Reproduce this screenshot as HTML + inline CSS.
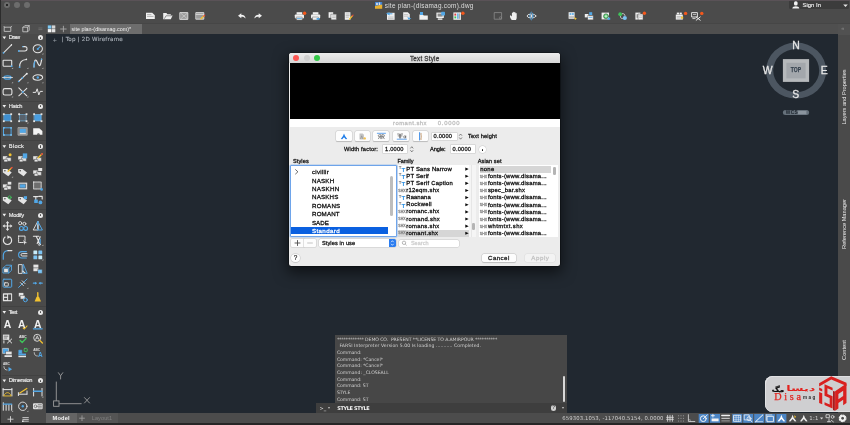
<!DOCTYPE html>
<html><head><meta charset="utf-8"><title>Text Style</title>
<style>
html,body{margin:0;padding:0;background:#212830;}
body{width:850px;height:425px;overflow:hidden;position:relative;font-family:"Liberation Sans",sans-serif;}
#root{position:absolute;left:0;top:0;width:850px;height:425px;overflow:hidden;will-change:transform;}
.r{position:absolute;box-sizing:border-box;}
.t{position:absolute;white-space:nowrap;}
.dj{font-family:"DejaVu Sans","Liberation Sans",sans-serif;}
.b{font-weight:bold;}
.k{-webkit-text-stroke:0.26px currentColor;}
svg{position:absolute;left:0;top:0;overflow:visible;}
</style></head><body><div id="root">
<div class="r" style="left:0px;top:0px;width:850px;height:24px;background:#4b4b4b;"></div>
<div class="r" style="left:0px;top:0px;width:850px;height:1px;background:#5a5257;"></div>
<div class="r" style="left:0px;top:23px;width:850px;height:11px;background:#4f4f4f;"></div>
<div class="r" style="left:0px;top:22.8px;width:850px;height:0.6px;background:#464646;"></div>
<div class="r" style="left:70px;top:23.8px;width:72px;height:10px;background:#6d6d6d;"></div>
<div class="r" style="left:0px;top:34px;width:45.5px;height:391px;background:#4a4a4a;"></div>
<div class="r" style="left:0px;top:0px;width:1.2px;height:425px;background:#2c2c2c;"></div>
<div class="r" style="left:838px;top:34.5px;width:12px;height:379px;background:#4a4a4a;"></div>
<div class="r" style="left:45.5px;top:412.6px;width:805px;height:12px;background:#4c4c4c;"></div>
<div class="r" style="left:46px;top:412.6px;width:30.5px;height:10.4px;background:#646464;"></div>
<div class="r" style="left:76.5px;top:412.6px;width:41.5px;height:10.4px;background:#545454;"></div>
<div class="r" style="left:0px;top:422.8px;width:850px;height:2.2px;background:#262626;"></div>
<div class="r" style="left:3.9999999999999996px;top:1.9999999999999996px;width:6.2px;height:6.2px;background:#6c6c6c;border-radius:50%;"></div>
<div class="r" style="left:13.9px;top:1.9999999999999996px;width:6.2px;height:6.2px;background:#6c6c6c;border-radius:50%;"></div>
<div class="r" style="left:23.9px;top:1.9999999999999996px;width:6.2px;height:6.2px;background:#6c6c6c;border-radius:50%;"></div>
<div class="r" style="left:5.8px;top:3.8px;width:2.6px;height:2.6px;background:#111;border-radius:50%;"></div>
<div class="r" style="left:789.2px;top:0.6px;width:59.4px;height:8.9px;background:#3c3c3c;border-radius:0 0 1.5px 1.5px;"></div>
<div class="t " style="left:802.6px;top:1.66px;font-size:5.9px;line-height:7.08px;color:#ececec;letter-spacing:0.005px;-webkit-text-stroke:0.15px #ececec;">Sign In</div>
<div class="t " style="left:384.7px;top:1.76px;font-size:6.4px;line-height:7.68px;color:#dedede;letter-spacing:0.269px;">site plan-(disamag.com).dwg</div>
<div class="t " style="left:71.5px;top:26.06px;font-size:5.4px;line-height:6.48px;color:#f0f0f0;">site plan-(disamag.com)*</div>
<div class="t dj" style="left:52.6px;top:36.90px;font-size:5.5px;line-height:6.60px;color:#9aa0a8;">+</div>
<div class="t dj" style="left:61.6px;top:36.34px;font-size:5.6px;line-height:6.72px;color:#aab0b8;letter-spacing:0.199px;-webkit-text-stroke:0.12px #aab0b8;">| Top | 2D Wireframe</div>
<div class="t " style="left:8.8px;top:34.48px;font-size:5.7px;line-height:6.84px;color:#ececec;letter-spacing:-0.667px;-webkit-text-stroke:0.15px #ececec;">Draw</div>
<svg width="850" height="425"><path d="M2.5,36.6 h3.6 l-1.8,2.7 z" fill="#f0f0f0"/></svg>
<div class="r" style="left:38.1px;top:35.4px;width:5px;height:5px;background:#e8e8e8;border-radius:50%;"></div>
<div class="r" style="left:40.0px;top:36.8px;width:1.2px;height:2.3px;background:#4a4a4a;border-radius:0.5px;"></div>
<div class="t " style="left:8.8px;top:102.88px;font-size:5.7px;line-height:6.84px;color:#ececec;letter-spacing:-0.298px;-webkit-text-stroke:0.15px #ececec;">Hatch</div>
<svg width="850" height="425"><path d="M2.5,105.0 h3.6 l-1.8,2.7 z" fill="#f0f0f0"/></svg>
<div class="r" style="left:38.1px;top:103.8px;width:5px;height:5px;background:#e8e8e8;border-radius:50%;"></div>
<div class="r" style="left:40.0px;top:105.2px;width:1.2px;height:2.3px;background:#4a4a4a;border-radius:0.5px;"></div>
<div class="t " style="left:8.8px;top:143.08px;font-size:5.7px;line-height:6.84px;color:#ececec;letter-spacing:0.315px;-webkit-text-stroke:0.15px #ececec;">Block</div>
<svg width="850" height="425"><path d="M2.5,145.2 h3.6 l-1.8,2.7 z" fill="#f0f0f0"/></svg>
<div class="r" style="left:38.1px;top:144.0px;width:5px;height:5px;background:#e8e8e8;border-radius:50%;"></div>
<div class="r" style="left:40.0px;top:145.4px;width:1.2px;height:2.3px;background:#4a4a4a;border-radius:0.5px;"></div>
<div class="t " style="left:8.8px;top:211.58px;font-size:5.7px;line-height:6.84px;color:#ececec;letter-spacing:-0.278px;-webkit-text-stroke:0.15px #ececec;">Modify</div>
<svg width="850" height="425"><path d="M2.5,213.7 h3.6 l-1.8,2.7 z" fill="#f0f0f0"/></svg>
<div class="r" style="left:38.1px;top:212.5px;width:5px;height:5px;background:#e8e8e8;border-radius:50%;"></div>
<div class="r" style="left:40.0px;top:213.9px;width:1.2px;height:2.3px;background:#4a4a4a;border-radius:0.5px;"></div>
<div class="t " style="left:8.8px;top:308.88px;font-size:5.7px;line-height:6.84px;color:#ececec;letter-spacing:-0.618px;-webkit-text-stroke:0.15px #ececec;">Text</div>
<svg width="850" height="425"><path d="M2.5,311.0 h3.6 l-1.8,2.7 z" fill="#f0f0f0"/></svg>
<div class="r" style="left:38.1px;top:309.8px;width:5px;height:5px;background:#e8e8e8;border-radius:50%;"></div>
<div class="r" style="left:40.0px;top:311.2px;width:1.2px;height:2.3px;background:#4a4a4a;border-radius:0.5px;"></div>
<div class="t " style="left:8.8px;top:377.38px;font-size:5.7px;line-height:6.84px;color:#ececec;letter-spacing:-0.416px;-webkit-text-stroke:0.15px #ececec;">Dimension</div>
<svg width="850" height="425"><path d="M2.5,379.5 h3.6 l-1.8,2.7 z" fill="#f0f0f0"/></svg>
<div class="r" style="left:38.1px;top:378.3px;width:5px;height:5px;background:#e8e8e8;border-radius:50%;"></div>
<div class="r" style="left:40.0px;top:379.7px;width:1.2px;height:2.3px;background:#4a4a4a;border-radius:0.5px;"></div>
<div class="r" style="left:1.5px;top:100.5px;width:44px;height:0.8px;background:#424242;"></div>
<div class="r" style="left:1.5px;top:140.3px;width:44px;height:0.8px;background:#424242;"></div>
<div class="r" style="left:1.5px;top:208.5px;width:44px;height:0.8px;background:#424242;"></div>
<div class="r" style="left:1.5px;top:305.5px;width:44px;height:0.8px;background:#424242;"></div>
<div class="r" style="left:1.5px;top:374.5px;width:44px;height:0.8px;background:#424242;"></div>
<div class="t" style="left:783.6px;top:93px;width:120px;height:8px;line-height:8px;text-align:center;font-size:5.65px;color:#e8e8e8;transform:rotate(-90deg);">Layers and Properties</div>
<div class="t" style="left:783.6px;top:219.6px;width:120px;height:8px;line-height:8px;text-align:center;font-size:5.65px;color:#e8e8e8;transform:rotate(-90deg);">Reference Manager</div>
<div class="t" style="left:783.6px;top:345.8px;width:120px;height:8px;line-height:8px;text-align:center;font-size:5.65px;color:#e8e8e8;transform:rotate(-90deg);">Content</div>
<div class="r" style="left:838px;top:23.5px;width:12px;height:11px;background:#515151;"></div>
<div class="t " style="left:841.2px;top:25.36px;font-size:5.4px;line-height:6.48px;color:#8c8c8c;">«</div>
<div class="t " style="left:52.6px;top:414.78px;font-size:5.7px;line-height:6.84px;color:#f4f4f4;letter-spacing:0.134px;font-weight:bold;">Model</div>
<svg width="850" height="425"><path d="M79.2,418.2 h5.6 M82,415.4 v5.6" stroke="#9c9c9c" stroke-width="0.9" fill="none"/></svg>
<div class="t " style="left:91.8px;top:415.00px;font-size:5.5px;line-height:6.60px;color:#808080;letter-spacing:0.105px;">Layout1</div>
<div class="t dj" style="left:363.6px;width:300px;text-align:right;top:415.02px;font-size:5.3px;line-height:6.36px;color:#cfcfcf;letter-spacing:0.1px;">659303.1053, -117040.5154, 0.0000</div>
<div class="t dj" style="left:809.3px;top:414.96px;font-size:5.4px;line-height:6.48px;color:#cfcfcf;letter-spacing:0.204px;">1:1</div>
<div class="r" style="left:335px;top:335px;width:232px;height:68px;background:#474747;"></div>
<div class="r" style="left:315.5px;top:403px;width:251.5px;height:9.8px;background:#3e3e3e;"></div>
<div class="t dj" style="left:336.9px;top:336.74px;font-size:4.6px;line-height:5.52px;color:#d0d0d0;letter-spacing:-0.065px;white-space:pre;">************ DEMO CO.  PRESENT **LICENSE TO A.AMIRPOUR **********</div>
<div class="t dj" style="left:339.5px;top:343.41px;font-size:4.6px;line-height:5.52px;color:#d0d0d0;letter-spacing:0.052px;white-space:pre;">FARSI Interpreter Version 5.00 Is loading ........... Completed.</div>
<div class="t dj" style="left:336.9px;top:350.08px;font-size:4.6px;line-height:5.52px;color:#d0d0d0;letter-spacing:-0.070px;white-space:pre;">Command:</div>
<div class="t dj" style="left:336.9px;top:356.75px;font-size:4.6px;line-height:5.52px;color:#d0d0d0;letter-spacing:-0.046px;white-space:pre;">Command: *Cancel*</div>
<div class="t dj" style="left:336.9px;top:363.42px;font-size:4.6px;line-height:5.52px;color:#d0d0d0;letter-spacing:-0.046px;white-space:pre;">Command: *Cancel*</div>
<div class="t dj" style="left:336.9px;top:370.09px;font-size:4.6px;line-height:5.52px;color:#d0d0d0;letter-spacing:-0.017px;white-space:pre;">Command: _CLOSEALL</div>
<div class="t dj" style="left:336.9px;top:376.76px;font-size:4.6px;line-height:5.52px;color:#d0d0d0;letter-spacing:-0.070px;white-space:pre;">Command:</div>
<div class="t dj" style="left:336.9px;top:383.43px;font-size:4.6px;line-height:5.52px;color:#d0d0d0;letter-spacing:-0.079px;white-space:pre;">Command: ST</div>
<div class="t dj" style="left:336.9px;top:390.10px;font-size:4.6px;line-height:5.52px;color:#d0d0d0;letter-spacing:-0.127px;white-space:pre;">STYLE</div>
<div class="t dj" style="left:336.9px;top:396.77px;font-size:4.6px;line-height:5.52px;color:#d0d0d0;letter-spacing:-0.079px;white-space:pre;">Command: ST</div>
<div class="t dj" style="left:337.2px;top:404.80px;font-size:5.0px;line-height:6.00px;color:#f6f6f6;letter-spacing:-0.361px;font-weight:bold;">STYLE STYLE</div>
<div class="t dj" style="left:319.5px;top:404.50px;font-size:5px;line-height:6.00px;color:#c8c8c8;font-weight:bold;">&gt;_</div>
<div class="r" style="left:327.8px;top:407.2px;width:0;height:0;border-left:1.5px solid transparent;border-right:1.5px solid transparent;border-top:2px solid #c0c0c0;"></div>
<div class="r" style="left:563px;top:376px;width:1.6px;height:25.5px;background:#d8d8d8;border-radius:1px;"></div>
<div class="r" style="left:550.8px;top:405.2px;width:5.6px;height:5.6px;background:#d0d0d0;border-radius:50%;"></div>
<div class="t " style="left:453.6px;width:200px;text-align:center;top:405.30px;font-size:4.5px;line-height:5.40px;color:#3e3e3e;font-weight:bold;">?</div>
<div class="r" style="left:562px;top:407.2px;width:0;height:0;border-left:1.6px solid transparent;border-right:1.6px solid transparent;border-top:2.2px solid #c8c8c8;"></div>
<div class="r" style="left:289px;top:53.3px;width:271px;height:212.3px;border-radius:2.5px;box-shadow:0 5px 14px 2px rgba(0,0,0,0.55),0 0 0 0.6px rgba(0,0,0,0.5);background:#ececec;overflow:hidden;"><div class="r" style="left:0;top:0;width:271px;height:10px;background:linear-gradient(#ececec,#d6d6d6);"></div><div class="r" style="left:0.5px;top:9.8px;width:270px;height:56px;background:#000;"></div><div class="r" style="left:0.5px;top:65.8px;width:270px;height:8.2px;background:#fff;"></div></div>
<div class="r" style="left:293.4px;top:55.4px;width:6px;height:6px;background:#fc5753;border-radius:50%;"></div>
<div class="r" style="left:303.5px;top:55.4px;width:6px;height:6px;background:#cfcfcf;border-radius:50%;"></div>
<div class="r" style="left:313.6px;top:55.4px;width:6px;height:6px;background:#33c748;border-radius:50%;"></div>
<div class="t k" style="left:410px;top:54.62px;font-size:6.3px;line-height:7.56px;color:#3a3a3a;letter-spacing:0.210px;">Text Style</div>
<div class="t k" style="left:393px;top:120.06px;font-size:5.9px;line-height:7.08px;color:#bdbdbd;letter-spacing:0.491px;">romant.shx</div>
<div class="t k" style="left:437.8px;top:120.06px;font-size:5.9px;line-height:7.08px;color:#bdbdbd;letter-spacing:0.731px;">0.0000</div>
<div class="r" style="left:336px;top:131.4px;width:15.6px;height:10px;background:#fdfdfd;border-radius:1.5px;box-shadow:0 0 0 0.5px #c9c9c9,0 0.6px 0.8px rgba(0,0,0,0.25);"></div>
<div class="r" style="left:354.8px;top:131.4px;width:15px;height:10px;background:#fdfdfd;border-radius:1.5px;box-shadow:0 0 0 0.5px #c9c9c9,0 0.6px 0.8px rgba(0,0,0,0.25);"></div>
<div class="r" style="left:373px;top:131.4px;width:16.4px;height:10px;background:#fdfdfd;border-radius:1.5px;box-shadow:0 0 0 0.5px #c9c9c9,0 0.6px 0.8px rgba(0,0,0,0.25);"></div>
<div class="r" style="left:392.7px;top:131.4px;width:16.5px;height:10px;background:#fdfdfd;border-radius:1.5px;box-shadow:0 0 0 0.5px #c9c9c9,0 0.6px 0.8px rgba(0,0,0,0.25);"></div>
<div class="r" style="left:412.5px;top:131.4px;width:15.6px;height:10px;background:#fdfdfd;border-radius:1.5px;box-shadow:0 0 0 0.5px #c9c9c9,0 0.6px 0.8px rgba(0,0,0,0.25);"></div>
<div class="r" style="left:431.5px;top:132.7px;width:25px;height:7.8px;background:#fff;box-shadow:0 0 0 0.5px #c4c4c4;"></div>
<div class="t k" style="left:433.6px;top:133.28px;font-size:5.7px;line-height:6.84px;color:#151515;letter-spacing:0.193px;">0.0000</div>
<div class="t k" style="left:468px;top:133.18px;font-size:5.7px;line-height:6.84px;color:#151515;letter-spacing:0.143px;">Text height</div>
<div class="t k" style="left:344px;top:146.18px;font-size:5.7px;line-height:6.84px;color:#151515;letter-spacing:0.167px;">Width factor:</div>
<div class="r" style="left:383px;top:145.4px;width:24px;height:7.8px;background:#fff;box-shadow:0 0 0 0.5px #c4c4c4;"></div>
<div class="t k" style="left:385.1px;top:145.98px;font-size:5.7px;line-height:6.84px;color:#151515;letter-spacing:0.193px;">1.0000</div>
<div class="t k" style="left:430px;top:146.08px;font-size:5.7px;line-height:6.84px;color:#151515;letter-spacing:-0.113px;">Angle:</div>
<div class="r" style="left:450.5px;top:145.2px;width:24.7px;height:8px;background:#fff;box-shadow:0 0 0 0.5px #c4c4c4;"></div>
<div class="t k" style="left:452.6px;top:145.88px;font-size:5.7px;line-height:6.84px;color:#151515;letter-spacing:0.193px;">0.0000</div>
<svg width="850" height="425"><path d="M459.20000000000005,135.7 l1.4,-1.7 l1.4,1.7 M459.20000000000005,137.5 l1.4,1.7 l1.4,-1.7" fill="none" stroke="#555" stroke-width="0.7"/></svg>
<svg width="850" height="425"><path d="M410.40000000000003,148.4 l1.4,-1.7 l1.4,1.7 M410.40000000000003,150.20000000000002 l1.4,1.7 l1.4,-1.7" fill="none" stroke="#555" stroke-width="0.7"/></svg>
<div class="r" style="left:478.7px;top:145.9px;width:7.2px;height:7.2px;background:#fff;border-radius:50%;box-shadow:0 0 0 0.4px #c8c8c8;"></div>
<div class="r" style="left:481.5px;top:149.2px;width:1.7px;height:1.7px;background:#111;border-radius:50%;"></div>
<div class="t k" style="left:293px;top:158.24px;font-size:5.6px;line-height:6.72px;color:#151515;letter-spacing:0.090px;">Styles</div>
<div class="t k" style="left:397.4px;top:158.24px;font-size:5.6px;line-height:6.72px;color:#151515;letter-spacing:-0.078px;">Family</div>
<div class="t k" style="left:477.8px;top:158.24px;font-size:5.6px;line-height:6.72px;color:#151515;letter-spacing:0.083px;">Asian set</div>
<div class="r" style="left:290.2px;top:164.6px;width:106.6px;height:72.4px;background:#fff;border:1.1px solid #6ea4ea;border-radius:1px;box-shadow:0 0 0 0.6px rgba(110,164,234,0.55);"></div>
<div class="r" style="left:291.4px;top:226.6px;width:96.8px;height:7.9px;background:#0a60e0;"></div>
<div class="t k" style="left:312px;top:168.18px;font-size:6.2px;line-height:7.44px;color:#0c0c0c;letter-spacing:0.235px;">civillir</div>
<div class="t k" style="left:312px;top:176.61px;font-size:6.2px;line-height:7.44px;color:#0c0c0c;letter-spacing:0.210px;">NASKH</div>
<div class="t k" style="left:312px;top:185.04px;font-size:6.2px;line-height:7.44px;color:#0c0c0c;letter-spacing:0.272px;">NASKHN</div>
<div class="t k" style="left:312px;top:193.47px;font-size:6.2px;line-height:7.44px;color:#0c0c0c;letter-spacing:0.180px;">NASKHS</div>
<div class="t k" style="left:312px;top:201.90px;font-size:6.2px;line-height:7.44px;color:#0c0c0c;letter-spacing:0.217px;">ROMANS</div>
<div class="t k" style="left:312px;top:210.33px;font-size:6.2px;line-height:7.44px;color:#0c0c0c;letter-spacing:0.167px;">ROMANT</div>
<div class="t k" style="left:312px;top:218.76px;font-size:6.2px;line-height:7.44px;color:#0c0c0c;letter-spacing:-0.028px;">SADE</div>
<div class="t k" style="left:312px;top:227.19px;font-size:6.2px;line-height:7.44px;color:#fff;letter-spacing:0.362px;">Standard</div>
<svg width="850" height="425"><path d="M295.3,169.4 l2.6,2.4 l-2.6,2.4" fill="none" stroke="#444" stroke-width="0.8"/></svg>
<div class="r" style="left:390.4px;top:175.8px;width:3px;height:40px;background:#bdbdbd;border-radius:1.5px;"></div>
<div class="r" style="left:397.6px;top:164.9px;width:78.6px;height:71.7px;background:#fff;"></div>
<div class="r" style="left:469.4px;top:164.9px;width:6.8px;height:71.7px;background:#f5f5f5;"></div>
<div class="r" style="left:397.6px;top:229.7px;width:71.5px;height:7px;background:#d6d6d6;"></div>
<div class="r" style="left:471px;top:165.2px;width:0.5px;height:71.4px;background:#e6e6e6;"></div>
<div class="r" style="left:472.2px;top:223.2px;width:2.6px;height:7px;background:#b4b4b4;border-radius:1.3px;"></div>
<div class="t " style="left:398.7px;top:165.36px;font-size:4.4px;line-height:5.28px;color:#707070;font-weight:bold;">T</div>
<div class="t " style="left:401.4px;top:165.88px;font-size:6.2px;line-height:7.44px;color:#2a8fe4;font-weight:bold;">T</div>
<div class="t k" style="left:406.3px;top:165.66px;font-size:5.9px;line-height:7.08px;color:#0c0c0c;letter-spacing:0.187px;">PT Sans Narrow</div>
<svg width="850" height="425"><path d="M465.3,167.50 l3.4,1.6 l-3.4,1.6 z" fill="#0a0a0a"/></svg>
<div class="t " style="left:398.7px;top:172.49px;font-size:4.4px;line-height:5.28px;color:#707070;font-weight:bold;">T</div>
<div class="t " style="left:401.4px;top:173.01px;font-size:6.2px;line-height:7.44px;color:#2a8fe4;font-weight:bold;">T</div>
<div class="t k" style="left:406.3px;top:172.79px;font-size:5.9px;line-height:7.08px;color:#0c0c0c;letter-spacing:0.185px;">PT Serif</div>
<svg width="850" height="425"><path d="M465.3,174.63 l3.4,1.6 l-3.4,1.6 z" fill="#0a0a0a"/></svg>
<div class="t " style="left:398.7px;top:179.62px;font-size:4.4px;line-height:5.28px;color:#707070;font-weight:bold;">T</div>
<div class="t " style="left:401.4px;top:180.14px;font-size:6.2px;line-height:7.44px;color:#2a8fe4;font-weight:bold;">T</div>
<div class="t k" style="left:406.3px;top:179.92px;font-size:5.9px;line-height:7.08px;color:#0c0c0c;letter-spacing:0.228px;">PT Serif Caption</div>
<svg width="850" height="425"><path d="M465.3,181.76 l3.4,1.6 l-3.4,1.6 z" fill="#0a0a0a"/></svg>
<div class="t k" style="left:398.3px;top:188.69px;font-size:3.5px;line-height:4.20px;color:#858585;letter-spacing:0.052px;">SHX</div>
<div class="t k" style="left:406.3px;top:187.05px;font-size:5.9px;line-height:7.08px;color:#0c0c0c;letter-spacing:0.230px;">r12eqm.shx</div>
<svg width="850" height="425"><path d="M465.3,188.89 l3.4,1.6 l-3.4,1.6 z" fill="#0a0a0a"/></svg>
<div class="t " style="left:398.7px;top:193.88px;font-size:4.4px;line-height:5.28px;color:#707070;font-weight:bold;">T</div>
<div class="t " style="left:401.4px;top:194.40px;font-size:6.2px;line-height:7.44px;color:#2a8fe4;font-weight:bold;">T</div>
<div class="t k" style="left:406.3px;top:194.18px;font-size:5.9px;line-height:7.08px;color:#0c0c0c;letter-spacing:0.075px;">Raanana</div>
<svg width="850" height="425"><path d="M465.3,196.02 l3.4,1.6 l-3.4,1.6 z" fill="#0a0a0a"/></svg>
<div class="t " style="left:398.7px;top:201.01px;font-size:4.4px;line-height:5.28px;color:#707070;font-weight:bold;">T</div>
<div class="t " style="left:401.4px;top:201.53px;font-size:6.2px;line-height:7.44px;color:#2a8fe4;font-weight:bold;">T</div>
<div class="t k" style="left:406.3px;top:201.31px;font-size:5.9px;line-height:7.08px;color:#0c0c0c;letter-spacing:0.256px;">Rockwell</div>
<svg width="850" height="425"><path d="M465.3,203.15 l3.4,1.6 l-3.4,1.6 z" fill="#0a0a0a"/></svg>
<div class="t k" style="left:398.3px;top:210.08px;font-size:3.5px;line-height:4.20px;color:#858585;letter-spacing:0.052px;">SHX</div>
<div class="t k" style="left:406.3px;top:208.44px;font-size:5.9px;line-height:7.08px;color:#0c0c0c;letter-spacing:0.267px;">romanc.shx</div>
<svg width="850" height="425"><path d="M465.3,210.28 l3.4,1.6 l-3.4,1.6 z" fill="#0a0a0a"/></svg>
<div class="t k" style="left:398.3px;top:217.21px;font-size:3.5px;line-height:4.20px;color:#858585;letter-spacing:0.052px;">SHX</div>
<div class="t k" style="left:406.3px;top:215.57px;font-size:5.9px;line-height:7.08px;color:#0c0c0c;letter-spacing:0.297px;">romand.shx</div>
<svg width="850" height="425"><path d="M465.3,217.41 l3.4,1.6 l-3.4,1.6 z" fill="#0a0a0a"/></svg>
<div class="t k" style="left:398.3px;top:224.34px;font-size:3.5px;line-height:4.20px;color:#858585;letter-spacing:0.052px;">SHX</div>
<div class="t k" style="left:406.3px;top:222.70px;font-size:5.9px;line-height:7.08px;color:#0c0c0c;letter-spacing:0.267px;">romans.shx</div>
<svg width="850" height="425"><path d="M465.3,224.54 l3.4,1.6 l-3.4,1.6 z" fill="#0a0a0a"/></svg>
<div class="t k" style="left:398.3px;top:231.47px;font-size:3.5px;line-height:4.20px;color:#858585;letter-spacing:0.052px;">SHX</div>
<div class="t k" style="left:406.3px;top:229.83px;font-size:5.9px;line-height:7.08px;color:#0c0c0c;letter-spacing:0.291px;">romant.shx</div>
<svg width="850" height="425"><path d="M465.3,231.67 l3.4,1.6 l-3.4,1.6 z" fill="#0a0a0a"/></svg>
<div class="r" style="left:478.8px;top:165.2px;width:79px;height:71.4px;background:#fff;"></div>
<div class="r" style="left:479.6px;top:166px;width:71.6px;height:6.7px;background:#d6d6d6;"></div>
<div class="r" style="left:553.2px;top:166.8px;width:2.6px;height:7.8px;background:#b4b4b4;border-radius:1.3px;"></div>
<div class="t k" style="left:480.2px;top:165.86px;font-size:5.9px;line-height:7.08px;color:#0c0c0c;letter-spacing:0.291px;">none</div>
<div class="t k" style="left:479.8px;top:174.65px;font-size:3.5px;line-height:4.20px;color:#858585;letter-spacing:0.052px;">SHX</div>
<div class="t k" style="left:487.9px;top:173.01px;font-size:5.9px;line-height:7.08px;color:#0c0c0c;letter-spacing:0.218px;">fonts-(www.disama...</div>
<div class="t k" style="left:479.8px;top:181.80px;font-size:3.5px;line-height:4.20px;color:#858585;letter-spacing:0.052px;">SHX</div>
<div class="t k" style="left:487.9px;top:180.16px;font-size:5.9px;line-height:7.08px;color:#0c0c0c;letter-spacing:0.218px;">fonts-(www.disama...</div>
<div class="t k" style="left:479.8px;top:188.95px;font-size:3.5px;line-height:4.20px;color:#858585;letter-spacing:0.052px;">SHX</div>
<div class="t k" style="left:487.9px;top:187.31px;font-size:5.9px;line-height:7.08px;color:#0c0c0c;letter-spacing:0.212px;">spec_bar.shx</div>
<div class="t k" style="left:479.8px;top:196.10px;font-size:3.5px;line-height:4.20px;color:#858585;letter-spacing:0.052px;">SHX</div>
<div class="t k" style="left:487.9px;top:194.46px;font-size:5.9px;line-height:7.08px;color:#0c0c0c;letter-spacing:0.218px;">fonts-(www.disama...</div>
<div class="t k" style="left:479.8px;top:203.25px;font-size:3.5px;line-height:4.20px;color:#858585;letter-spacing:0.052px;">SHX</div>
<div class="t k" style="left:487.9px;top:201.61px;font-size:5.9px;line-height:7.08px;color:#0c0c0c;letter-spacing:0.218px;">fonts-(www.disama...</div>
<div class="t k" style="left:479.8px;top:210.40px;font-size:3.5px;line-height:4.20px;color:#858585;letter-spacing:0.052px;">SHX</div>
<div class="t k" style="left:487.9px;top:208.76px;font-size:5.9px;line-height:7.08px;color:#0c0c0c;letter-spacing:0.218px;">fonts-(www.disama...</div>
<div class="t k" style="left:479.8px;top:217.55px;font-size:3.5px;line-height:4.20px;color:#858585;letter-spacing:0.052px;">SHX</div>
<div class="t k" style="left:487.9px;top:215.91px;font-size:5.9px;line-height:7.08px;color:#0c0c0c;letter-spacing:0.218px;">fonts-(www.disama...</div>
<div class="t k" style="left:479.8px;top:224.70px;font-size:3.5px;line-height:4.20px;color:#858585;letter-spacing:0.052px;">SHX</div>
<div class="t k" style="left:487.9px;top:223.06px;font-size:5.9px;line-height:7.08px;color:#0c0c0c;letter-spacing:0.375px;">whtmtxt.shx</div>
<div class="t k" style="left:479.8px;top:231.85px;font-size:3.5px;line-height:4.20px;color:#858585;letter-spacing:0.052px;">SHX</div>
<div class="t k" style="left:487.9px;top:230.21px;font-size:5.9px;line-height:7.08px;color:#0c0c0c;letter-spacing:0.218px;">fonts-(www.disama...</div>
<div class="r" style="left:291.4px;top:239.4px;width:12.2px;height:7.2px;background:#fdfdfd;box-shadow:0 0 0 0.5px #c6c6c6;border-radius:1px 0 0 1px;"></div>
<div class="r" style="left:303.9px;top:239.4px;width:12.2px;height:7.2px;background:#fdfdfd;box-shadow:0 0 0 0.5px #c6c6c6;border-radius:0 1px 1px 0;"></div>
<svg width="850" height="425"><path d="M294.6,243 h5.8 M297.5,240.1 v5.8" stroke="#4c4c4c" stroke-width="0.9" fill="none"/><path d="M307.2,243 h5.6" stroke="#bcbcbc" stroke-width="0.9" fill="none"/></svg>
<div class="r" style="left:319px;top:239.4px;width:77px;height:7.2px;background:#fff;box-shadow:0 0 0 0.5px #c6c6c6;border-radius:1.5px;"></div>
<div class="r" style="left:388.6px;top:239.2px;width:7.6px;height:7.6px;background:#2a7cf0;border-radius:0 1.6px 1.6px 0;"></div>
<svg width="850" height="425"><path d="M391.09999999999997,242.2 l1.3,-1.5 l1.3,1.5 M391.09999999999997,243.8 l1.3,1.5 l1.3,-1.5" fill="none" stroke="#fff" stroke-width="0.7"/></svg>
<div class="t k" style="left:321.9px;top:239.64px;font-size:5.6px;line-height:6.72px;color:#151515;letter-spacing:0.129px;">Styles in use</div>
<div class="r" style="left:399.4px;top:239.6px;width:60px;height:7px;background:#fff;box-shadow:0 0 0 0.5px #c6c6c6;border-radius:1.5px;"></div>
<svg width="850" height="425"><circle cx="404" cy="242.8" r="1.7" fill="none" stroke="#888" stroke-width="0.6"/><path d="M405.2,244 l1.4,1.4" stroke="#888" stroke-width="0.6"/></svg>
<div class="t k" style="left:410.9px;top:239.80px;font-size:5.5px;line-height:6.60px;color:#cfcfcf;letter-spacing:0.035px;">Search</div>
<div class="r" style="left:291.4px;top:253.6px;width:8.2px;height:8.2px;background:#fdfdfd;border-radius:50%;box-shadow:0 0 0 0.5px #c2c2c2,0 0.5px 0.8px rgba(0,0,0,.2);"></div>
<div class="t " style="left:195.5px;width:200px;text-align:center;top:254.06px;font-size:6.4px;line-height:7.68px;color:#2a2a2a;-webkit-text-stroke:0.2px #2a2a2a;">?</div>
<div class="r" style="left:481.6px;top:254.3px;width:34.4px;height:7.4px;background:#fdfdfd;border-radius:1.8px;box-shadow:0 0 0 0.5px #c4c4c4,0 0.6px 0.8px rgba(0,0,0,.22);"></div>
<div class="t k" style="left:488px;top:254.08px;font-size:6.2px;line-height:7.44px;color:#1a1a1a;letter-spacing:0.420px;">Cancel</div>
<div class="r" style="left:525px;top:254.3px;width:30.2px;height:7.4px;background:#f3f3f3;border-radius:1.8px;box-shadow:0 0 0 0.5px #dcdcdc;"></div>
<div class="t k" style="left:531.2px;top:254.08px;font-size:6.2px;line-height:7.44px;color:#c2c2c2;letter-spacing:0.573px;">Apply</div>
<svg width="850" height="425"><path fill-rule="evenodd" fill="#4c5661" d="M766,70.6 a30.1,28 0 1 0 60.2,0 a30.1,28 0 1 0 -60.2,0 Z M773.2,70.6 a23,21.6 0 1 0 46,0 a23,21.6 0 1 0 -46,0 Z"/><rect x="782.9" y="59.1" width="26.2" height="22.8" fill="#b6b9bc"/><rect x="786.4" y="62.8" width="19.2" height="15.6" fill="#a3a7ac"/><rect x="782.9" y="110.1" width="26.2" height="5" rx="2.5" fill="#66717b"/><rect x="798" y="111" width="8.4" height="3.3" rx="0.6" fill="#8b959e"/></svg>
<div class="t " style="left:696.1px;width:200px;text-align:center;top:66.18px;font-size:7.2px;line-height:8.64px;color:#36424f;font-weight:bold;transform:scaleX(0.7);-webkit-text-stroke:0.25px #36424f;">TOP</div>
<div class="t " style="left:695.9px;width:200px;text-align:center;top:39.76px;font-size:10.4px;line-height:12.48px;color:#e6e6e6;-webkit-text-stroke:0.3px #e6e6e6;">N</div>
<div class="t " style="left:695.6px;width:200px;text-align:center;top:89.06px;font-size:10.4px;line-height:12.48px;color:#e6e6e6;-webkit-text-stroke:0.3px #e6e6e6;">S</div>
<div class="t " style="left:667.6px;width:200px;text-align:center;top:64.56px;font-size:10.4px;line-height:12.48px;color:#e6e6e6;-webkit-text-stroke:0.3px #e6e6e6;">W</div>
<div class="t " style="left:724.1px;width:200px;text-align:center;top:64.56px;font-size:10.4px;line-height:12.48px;color:#e6e6e6;-webkit-text-stroke:0.3px #e6e6e6;">E</div>
<div class="t " style="left:785.8px;top:109.82px;font-size:4.8px;line-height:5.76px;color:#1b232c;letter-spacing:0.301px;font-weight:bold;">WCS</div>
<svg width="850" height="425"><g fill="none" stroke="#9c9c9c" stroke-width="0.9"><rect x="53.6" y="400.9" width="5.4" height="5.4"/><path d="M56.3,400.9 V381.6 M59,403.7 H81.6"/><path d="M58.2,372.4 l2.4,3.4 l2.4,-3.4 M60.6,375.8 v3.6"/><path d="M84.2,397.3 l5.6,6 M89.8,397.3 l-5.6,6"/></g></svg>
<div class="r" style="left:765.2px;top:375.6px;width:86px;height:36.4px;background:#cfcfd1;border-radius:7.5px 0 0 7.5px;box-shadow:inset 0.7px 0.7px 0 0.1px #e6e6e8, inset 0 -0.7px 0 0.1px #e6e6e8;"></div>
<div class="t " style="left:774.3px;top:390.68px;font-size:10.2px;line-height:12.24px;color:#e3231f;letter-spacing:2.668px;font-family:'Liberation Serif',serif;-webkit-text-stroke:0.25px #e3231f;">Disa</div>
<div class="t " style="left:803.1px;top:395.00px;font-size:4.5px;line-height:5.40px;color:#2a2a2a;letter-spacing:1.424px;font-weight:bold;">mag</div>
<div class="t dj" style="left:784.4px;top:382.6px;width:31.4px;height:12px;text-align:right;direction:rtl;font-size:9.4px;line-height:12px;font-weight:bold;color:#e3231f;transform-origin:100% 50%;transform:scale(1.36,0.8);">دیسا</div>
<div class="t dj" style="left:773.6px;top:382.6px;-webkit-text-stroke:0.3px #0c0c0c;width:11px;height:12px;text-align:left;direction:rtl;font-size:8.2px;line-height:12px;font-weight:bold;color:#0c0c0c;transform-origin:0 50%;transform:scale(0.94,0.86);">مگ</div>
<svg width="850" height="425"><g fill="#d9201f"><polygon points="819.12,383.19 831.24,376.15 846.48,382.67 846.48,385.99 831.24,379.46 822.23,384.85 819.12,386.51"/><polygon points="819.12,387.54 822.23,388.89 822.23,391.48 819.12,390.13"/><polygon points="819.12,391.90 822.23,393.24 822.23,404.33 819.12,402.88"/><polygon points="824.51,384.23 832.59,387.75 832.59,390.45 827.41,388.17 827.41,393.97 832.59,396.25 832.59,408.48 824.51,404.95 824.51,402.26 829.69,404.54 829.69,397.91 824.51,395.63"/><path fill-rule="evenodd" d="M835.08,391.27 L846.48,383.61 L846.48,403.09 L843.16,405.37 L843.16,399.77 L838.39,403.09 L838.39,408.48 L835.08,410.76 Z M838.39,393.97 L843.16,390.86 L843.16,396.04 L838.39,399.15 Z"/><polygon fill="#a81a1c" points="833.01,391.07 834.87,391.48 834.87,410.76 833.01,409.93"/></g></svg>
<svg width="850" height="425" viewBox="0 0 850 425"><g transform="translate(7.5,48.8)" fill="none" stroke="#e4e4e4" stroke-width="1.05" stroke-linecap="round" stroke-linejoin="round"><path d="M-4,4 L4,-4"/><circle cx="-4" cy="4" r="0.9" fill="#52a7e6" stroke="none"/><circle cx="4" cy="-4" r="0.7" fill="#e4e4e4" stroke="none"/></g><g transform="translate(22.8,48.8)" fill="none" stroke="#e4e4e4" stroke-width="1.05" stroke-linecap="round" stroke-linejoin="round"><path d="M-4,2.2 H2 a2.2,2.2 0 0 0 0,-4.4 H0"/><circle cx="-4" cy="2.2" r="0.9" fill="#52a7e6" stroke="none"/><circle cx="0" cy="-2.2" r="0.7" fill="#52a7e6" stroke="none"/></g><g transform="translate(37.8,48.8)" fill="none" stroke="#e4e4e4" stroke-width="1.05" stroke-linecap="round" stroke-linejoin="round"><ellipse cx="0" cy="0" rx="4.6" ry="4"/><path d="M0,0 L2.6,-2.4" stroke="#52a7e6"/><circle cx="0" cy="0.2" r="1.1" fill="#52a7e6" stroke="none"/></g><path d="M43.4,53.0 v1.6 h-1.6 z" fill="#a8a8a8"/><g transform="translate(7.5,63.2)" fill="none" stroke="#e4e4e4" stroke-width="1.05" stroke-linecap="round" stroke-linejoin="round"><rect x="-4.4" y="-3" width="8.6" height="6" rx="0.6" stroke-width="1.1"/><circle cx="4.2" cy="3" r="0.9" fill="#52a7e6" stroke="none"/></g><path d="M13.1,67.4 v1.6 h-1.6 z" fill="#a8a8a8"/><g transform="translate(22.8,63.2)" fill="none" stroke="#e4e4e4" stroke-width="1.05" stroke-linecap="round" stroke-linejoin="round"><path d="M-3.2,4 C-3.4,-1 -0.5,-3.6 3.6,-3.8"/><circle cx="-3.2" cy="4" r="0.9" fill="#52a7e6" stroke="none"/><circle cx="3.6" cy="-3.8" r="0.8" fill="#e4e4e4" stroke="none"/></g><path d="M28.4,67.4 v1.6 h-1.6 z" fill="#a8a8a8"/><g transform="translate(37.8,63.2)" fill="none" stroke="#e4e4e4" stroke-width="1.05" stroke-linecap="round" stroke-linejoin="round"><path d="M-3.8,3.8 C-3.8,-2 -2.6,-4.6 -1.2,-2.4 C0,0 1.6,4.6 2.8,1 C3.4,-1 3.8,-2.6 3.8,-4" stroke-width="1.2"/><path d="M-3.8,3.8 C-3.8,1.5 -3.6,0 -3,-1.6" stroke="#52a7e6" stroke-width="1.2"/><circle cx="3.8" cy="-4" r="0.8" fill="#52a7e6" stroke="none"/></g><path d="M43.4,67.4 v1.6 h-1.6 z" fill="#a8a8a8"/><g transform="translate(7.5,77.5)" fill="none" stroke="#e4e4e4" stroke-width="1.05" stroke-linecap="round" stroke-linejoin="round"><ellipse cx="0" cy="0" rx="3.6" ry="1.7" stroke="#52a7e6" stroke-width="1.2"/><path d="M-5,0 H5" stroke-width="0.8"/></g><path d="M13.1,81.7 v1.6 h-1.6 z" fill="#a8a8a8"/><g transform="translate(22.8,77.5)" fill="none" stroke="#e4e4e4" stroke-width="1.05" stroke-linecap="round" stroke-linejoin="round"><path d="M-4.2,4 L4,-3.8"/><circle cx="4" cy="-3.8" r="1.0" fill="#e4e4e4" stroke="none"/><circle cx="-0.4" cy="0.4" r="0.9" fill="#52a7e6" stroke="none"/><circle cx="-4.2" cy="4" r="0.8" fill="#52a7e6" stroke="none"/></g><path d="M28.4,81.7 v1.6 h-1.6 z" fill="#a8a8a8"/><g transform="translate(37.8,77.5)" fill="none" stroke="#e4e4e4" stroke-width="1.05" stroke-linecap="round" stroke-linejoin="round"><ellipse cx="0" cy="0" rx="4.8" ry="2.7"/><circle cx="0" cy="0" r="1.2" fill="#52a7e6" stroke="none"/></g><path d="M43.4,81.7 v1.6 h-1.6 z" fill="#a8a8a8"/><g transform="translate(7.5,91.8)" fill="none" stroke="#e4e4e4" stroke-width="1.05" stroke-linecap="round" stroke-linejoin="round"><rect x="-4.4" y="-3.2" width="8.8" height="6.4" rx="1.8" stroke-width="1.1"/></g><path d="M13.1,96.0 v1.6 h-1.6 z" fill="#a8a8a8"/><g transform="translate(22.8,91.8)" fill="none" stroke="#e4e4e4" stroke-width="1.05" stroke-linecap="round" stroke-linejoin="round"><path d="M-4,-4 L4,4 M-4,4 L4,-3.4"/><circle cx="0" cy="0.1" r="1.0" fill="#52a7e6" stroke="none"/></g><path d="M28.4,96.0 v1.6 h-1.6 z" fill="#a8a8a8"/><g transform="translate(37.8,91.8)" fill="none" stroke="#e4e4e4" stroke-width="1.05" stroke-linecap="round" stroke-linejoin="round"><path d="M-4.6,0.6 H-2 L-0.6,-3 L1,3.2 L2.4,-0.4 H4.6" stroke-width="1.0"/></g><g transform="translate(7.5,117.7)" fill="none" stroke="#e4e4e4" stroke-width="1.05" stroke-linecap="round" stroke-linejoin="round"><rect x="-3.4" y="-3.2" width="6.8" height="6.4" fill="#3f8fd0" stroke="#7cc4f4" stroke-width="0.6"/><rect x="-4.6" y="-4.4" width="1.8" height="1.8" fill="#e4e4e4" stroke="none"/><rect x="2.8" y="-4.4" width="1.8" height="1.8" fill="#e4e4e4" stroke="none"/><rect x="-4.6" y="2.6" width="1.8" height="1.8" fill="#e4e4e4" stroke="none"/><rect x="2.8" y="2.6" width="1.8" height="1.8" fill="#e4e4e4" stroke="none"/></g><g transform="translate(22.8,117.7)" fill="none" stroke="#e4e4e4" stroke-width="1.05" stroke-linecap="round" stroke-linejoin="round"><rect x="-3.4" y="-3.2" width="6.8" height="6.4" fill="#58626c" stroke="#7cc4f4" stroke-width="0.6" stroke-dasharray="1.2 0.9"/><rect x="-4.6" y="-4.4" width="1.8" height="1.8" fill="#e4e4e4" stroke="none"/><rect x="2.8" y="-4.4" width="1.8" height="1.8" fill="#e4e4e4" stroke="none"/><rect x="-4.6" y="2.6" width="1.8" height="1.8" fill="#e4e4e4" stroke="none"/><rect x="2.8" y="2.6" width="1.8" height="1.8" fill="#e4e4e4" stroke="none"/></g><path d="M28.4,121.9 v1.6 h-1.6 z" fill="#a8a8a8"/><g transform="translate(37.8,117.7)" fill="none" stroke="#e4e4e4" stroke-width="1.05" stroke-linecap="round" stroke-linejoin="round"><rect x="-3.4" y="-3.2" width="6.8" height="6.4" fill="#4a9ee0" stroke="#7cc4f4" stroke-width="0.6"/><rect x="-4.6" y="-4.4" width="1.8" height="1.8" fill="#e4e4e4" stroke="none"/><rect x="2.8" y="-4.4" width="1.8" height="1.8" fill="#e4e4e4" stroke="none"/><rect x="-4.6" y="2.6" width="1.8" height="1.8" fill="#e4e4e4" stroke="none"/><rect x="2.8" y="2.6" width="1.8" height="1.8" fill="#e4e4e4" stroke="none"/></g><g transform="translate(7.5,131.4)" fill="none" stroke="#e4e4e4" stroke-width="1.05" stroke-linecap="round" stroke-linejoin="round"><rect x="-3.6" y="-3.6" width="7.2" height="7.2" stroke="#52a7e6" stroke-width="1"/><circle cx="-3.6" cy="-3.6" r="0.9" fill="#7cc4f4" stroke="none"/><circle cx="3.6" cy="-3.6" r="0.9" fill="#7cc4f4" stroke="none"/><circle cx="-3.6" cy="3.6" r="0.9" fill="#7cc4f4" stroke="none"/><circle cx="3.6" cy="3.6" r="0.9" fill="#7cc4f4" stroke="none"/></g><g transform="translate(22.8,131.4)" fill="none" stroke="#e4e4e4" stroke-width="1.05" stroke-linecap="round" stroke-linejoin="round"><rect x="-4.4" y="-3.8" width="8.8" height="7.6" fill="#8d8d8d" stroke="#b8b8b8" stroke-width="0.7"/><rect x="-3" y="-2.5" width="6" height="4" fill="#52a7e6" stroke="none"/><rect x="-3" y="1.5" width="6" height="1.2" fill="#d8d8d8" stroke="none"/></g><g transform="translate(37.8,131.4)" fill="none" stroke="#e4e4e4" stroke-width="1.05" stroke-linecap="round" stroke-linejoin="round"><path d="M-4.6,-3.2 H1.5 L4.6,-0.4 V3.4 H-4.6 Z" fill="#f4f4f4" stroke="none"/><path d="M-1,3.4 a1.6,1.6 0 0 1 3.2,0 Z" fill="#4a4a4a" stroke="none"/></g><g transform="translate(7.5,157.8)" fill="none" stroke="#e4e4e4" stroke-width="1.05" stroke-linecap="round" stroke-linejoin="round"><rect x="-4.6" y="-1.6" width="4.4" height="3.4" fill="#e4e4e4" stroke="none"/><rect x="-1" y="-0.2" width="4.6" height="3.6" fill="#e4e4e4" stroke="#4a4a4a" stroke-width="0.5"/><rect x="-3.4" y="1.6" width="3.4" height="2.4" fill="#e4e4e4" stroke="#4a4a4a" stroke-width="0.4"/><circle cx="2.6" cy="-3" r="1.5" fill="#f2c230" stroke="none"/></g><g transform="translate(22.8,157.8)" fill="none" stroke="#e4e4e4" stroke-width="1.05" stroke-linecap="round" stroke-linejoin="round"><rect x="-4.6" y="-1.6" width="4.4" height="3.4" fill="#e4e4e4" stroke="none"/><rect x="-1" y="-0.2" width="4.6" height="3.6" fill="#e4e4e4" stroke="#4a4a4a" stroke-width="0.5"/><rect x="-3.4" y="1.6" width="3.4" height="2.4" fill="#e4e4e4" stroke="#4a4a4a" stroke-width="0.4"/><rect x="0" y="-4.4" width="4.4" height="5" fill="#52a7e6" stroke="none"/></g><g transform="translate(37.8,157.8)" fill="none" stroke="#e4e4e4" stroke-width="1.05" stroke-linecap="round" stroke-linejoin="round"><rect x="-4.6" y="-1.6" width="4.4" height="3.4" fill="#e4e4e4" stroke="none"/><rect x="-1" y="-0.2" width="4.6" height="3.6" fill="#e4e4e4" stroke="#4a4a4a" stroke-width="0.5"/><rect x="-3.4" y="1.6" width="3.4" height="2.4" fill="#e4e4e4" stroke="#4a4a4a" stroke-width="0.4"/><path d="M0.4,0 L4.4,-4" stroke="#f2c230" stroke-width="1.3"/><path d="M3.6,-3.2 L4.6,-4.2" stroke="#e04040" stroke-width="1.3"/></g><g transform="translate(7.5,172)" fill="none" stroke="#e4e4e4" stroke-width="1.05" stroke-linecap="round" stroke-linejoin="round"><path d="M-4.6,-3 H-0.4 L4.2,0.6 L0.8,4.2 L-4.6,0.4 Z" fill="#e4e4e4" stroke="none"/><circle cx="-2.6" cy="-1.2" r="0.8" fill="#4a4a4a" stroke="none"/><path d="M0.6,-0.8 L4.2,-4.2" stroke="#f2c230" stroke-width="1.3"/><path d="M3.6,-3.6 L4.6,-4.6" stroke="#e04040" stroke-width="1.3"/></g><path d="M13.1,176.2 v1.6 h-1.6 z" fill="#a8a8a8"/><g transform="translate(22.8,172)" fill="none" stroke="#e4e4e4" stroke-width="1.05" stroke-linecap="round" stroke-linejoin="round"><path d="M-4.6,-3 H-0.4 L4.2,0.6 L0.8,4.2 L-4.6,0.4 Z" fill="#e4e4e4" stroke="none"/><circle cx="-2.6" cy="-1.2" r="0.8" fill="#4a4a4a" stroke="none"/></g><g transform="translate(37.8,172)" fill="none" stroke="#e4e4e4" stroke-width="1.05" stroke-linecap="round" stroke-linejoin="round"><rect x="-4.6" y="-1.6" width="4.4" height="3.4" fill="#e4e4e4" stroke="none"/><rect x="-1" y="-0.2" width="4.6" height="3.6" fill="#e4e4e4" stroke="#4a4a4a" stroke-width="0.5"/><rect x="-3.4" y="1.6" width="3.4" height="2.4" fill="#e4e4e4" stroke="#4a4a4a" stroke-width="0.4"/><rect x="0.4" y="-4" width="4" height="3" fill="#e4e4e4" stroke="none"/></g><g transform="translate(7.5,186)" fill="none" stroke="#e4e4e4" stroke-width="1.05" stroke-linecap="round" stroke-linejoin="round"><rect x="-4.6" y="-1.6" width="4.4" height="3.4" fill="#e4e4e4" stroke="none"/><rect x="-1" y="-0.2" width="4.6" height="3.6" fill="#e4e4e4" stroke="#4a4a4a" stroke-width="0.5"/><rect x="-3.4" y="1.6" width="3.4" height="2.4" fill="#e4e4e4" stroke="#4a4a4a" stroke-width="0.4"/><rect x="0.2" y="-4.2" width="3.6" height="2.8" fill="#e4e4e4" stroke="none"/></g><g transform="translate(22.8,186)" fill="none" stroke="#e4e4e4" stroke-width="1.05" stroke-linecap="round" stroke-linejoin="round"><rect x="-4.4" y="-3.4" width="8.8" height="6.8" fill="#dcdcdc" stroke="none"/><rect x="-2.8" y="-1.9" width="5.6" height="3.8" fill="#52a7e6" stroke="#4a4a4a" stroke-width="0.5"/></g><g transform="translate(37.8,186)" fill="none" stroke="#e4e4e4" stroke-width="1.05" stroke-linecap="round" stroke-linejoin="round"><rect x="-4.2" y="-4" width="7.6" height="7" fill="#6e6e6e" stroke="#e4e4e4" stroke-width="0.8" stroke-dasharray="1 0.6"/><circle cx="3.8" cy="3.4" r="1.3" fill="#52a7e6" stroke="none"/></g><g transform="translate(7.5,200)" fill="none" stroke="#e4e4e4" stroke-width="1.05" stroke-linecap="round" stroke-linejoin="round"><path d="M-4.6,-3 H-0.4 L4.2,0.6 L0.8,4.2 L-4.6,0.4 Z" fill="#e4e4e4" stroke="none"/><circle cx="-2.6" cy="-1.2" r="0.8" fill="#4a4a4a" stroke="none"/><circle cx="2.2" cy="-2.6" r="1.5" fill="none" stroke="#3fc25a" stroke-width="0.9"/></g><g transform="translate(22.8,200)" fill="none" stroke="#e4e4e4" stroke-width="1.05" stroke-linecap="round" stroke-linejoin="round"><path d="M-4.6,-3 H-0.4 L4.2,0.6 L0.8,4.2 L-4.6,0.4 Z" fill="#e4e4e4" stroke="none"/><circle cx="-2.6" cy="-1.2" r="0.8" fill="#4a4a4a" stroke="none"/><rect x="1" y="-3.8" width="3.2" height="3" fill="#52a7e6" stroke="none"/></g><g transform="translate(37.8,200)" fill="none" stroke="#e4e4e4" stroke-width="1.05" stroke-linecap="round" stroke-linejoin="round"><path d="M-4.2,-3.4 H0 M-2,-3.4 V-0.6 M1,-3.6 H4.4 V-1" stroke-width="1.1"/><rect x="-3.6" y="-0.4" width="3.6" height="3.4" fill="#52a7e6" stroke="none"/><circle cx="2.6" cy="2.4" r="1.9" fill="#52a7e6" stroke="none"/></g><g transform="translate(7.5,226)" fill="none" stroke="#e4e4e4" stroke-width="1.05" stroke-linecap="round" stroke-linejoin="round"><path d="M0,-3 V3 M-3,0 H3" stroke-width="1.1"/><path d="M0,-5 L1.8,-2.8 H-1.8 Z M0,5 L1.8,2.8 H-1.8 Z M-5,0 L-2.8,1.8 V-1.8 Z M5,0 L2.8,1.8 V-1.8 Z" fill="#e4e4e4" stroke="none"/></g><g transform="translate(22.8,226)" fill="none" stroke="#e4e4e4" stroke-width="1.05" stroke-linecap="round" stroke-linejoin="round"><circle cx="-2.6" cy="-2.8" r="1.6" stroke-width="0.9"/><circle cx="1.6" cy="-2.2" r="1.5" stroke-width="0.9"/><circle cx="-1.4" cy="2.4" r="1.9" stroke="#52a7e6" stroke-width="1.2"/><circle cx="2.8" cy="2.4" r="1.9" stroke="#52a7e6" stroke-width="1.2"/></g><g transform="translate(37.8,226)" fill="none" stroke="#e4e4e4" stroke-width="1.05" stroke-linecap="round" stroke-linejoin="round"><path d="M0,-4.6 L-4.6,4 H0 Z" stroke="#e4e4e4" stroke-width="0.9"/><path d="M0,-4.6 L4.6,4 H0 Z" stroke="#52a7e6" stroke-width="1"/><path d="M0,-1 V2.4" stroke="#e4e4e4" stroke-width="0.8"/></g><g transform="translate(7.5,240.3)" fill="none" stroke="#e4e4e4" stroke-width="1.05" stroke-linecap="round" stroke-linejoin="round"><path d="M2.4,-3.2 A4.1,4.1 0 1 1 -2.4,-3.2" stroke-width="1.2"/><path d="M-0.2,-5 L2.8,-3.2 L0,-1.2 Z" fill="#e4e4e4" stroke="none"/></g><g transform="translate(22.8,240.3)" fill="none" stroke="#e4e4e4" stroke-width="1.05" stroke-linecap="round" stroke-linejoin="round"><rect x="-4.2" y="-4.2" width="6.4" height="6.4" stroke-dasharray="1.1 0.8" stroke-width="1"/><path d="M0.2,-0.6 L4.6,2.6 L2.4,3 L1.6,5 Z" fill="#e4e4e4" stroke="#4a4a4a" stroke-width="0.4"/></g><g transform="translate(37.8,240.3)" fill="none" stroke="#e4e4e4" stroke-width="1.05" stroke-linecap="round" stroke-linejoin="round"><path d="M-4.4,-4 H1 M-1.6,-4 L2,3.6 M2.4,-3.6 L-0.6,3.2" stroke-width="1.1"/><path d="M2.4,-1.2 V4" stroke="#52a7e6" stroke-width="1.1"/><circle cx="1.6" cy="4.2" r="1" stroke-width="0.7"/></g><path d="M43.4,244.5 v1.6 h-1.6 z" fill="#a8a8a8"/><g transform="translate(7.5,254.8)" fill="none" stroke="#e4e4e4" stroke-width="1.05" stroke-linecap="round" stroke-linejoin="round"><path d="M-4.2,4.4 V0.4 A4.6,4.6 0 0 1 0.4,-4.2" stroke="#52a7e6" stroke-width="1.2"/><path d="M0.4,-4.2 H4.4" stroke-width="1.1" stroke-dasharray="1.6 0.8"/></g><path d="M13.1,259.0 v1.6 h-1.6 z" fill="#a8a8a8"/><g transform="translate(22.8,254.8)" fill="none" stroke="#e4e4e4" stroke-width="1.05" stroke-linecap="round" stroke-linejoin="round"><path d="M3.6,-3.2 H-1 a3.2,3.2 0 0 0 0,6.4 H3.6" stroke="#52a7e6" stroke-width="1.1"/><path d="M4.2,-1.2 H-0.6 a1.2,1.2 0 0 0 0,2.4 H4.2" stroke-width="1"/></g><g transform="translate(37.8,254.8)" fill="none" stroke="#e4e4e4" stroke-width="1.05" stroke-linecap="round" stroke-linejoin="round"><rect x="-4.4" y="-4.4" width="3.8" height="3.8" rx="0.5" fill="#c8ecfa" stroke="none"/><rect x="0.6" y="-4.4" width="3.8" height="3.8" rx="0.5" fill="#7cc4f4" stroke="none"/><rect x="-4.4" y="0.6" width="3.8" height="3.8" rx="0.5" fill="#7cc4f4" stroke="none"/><rect x="0.6" y="0.6" width="3.8" height="3.8" rx="0.5" fill="#c8ecfa" stroke="none"/></g><path d="M43.4,259.0 v1.6 h-1.6 z" fill="#a8a8a8"/><g transform="translate(7.5,269)" fill="none" stroke="#e4e4e4" stroke-width="1.05" stroke-linecap="round" stroke-linejoin="round"><path d="M-4.2,-1 L-1.4,-3.8 H4 L4,1.4 L1.2,4 H-4.2 Z M-4.2,-1 H1.2 V4 M1.2,-1 L4,-3.8" stroke="#52a7e6" stroke-width="0.9"/><rect x="-3.4" y="-0.2" width="3.8" height="3.4" fill="#e4e4e4" stroke="none"/></g><g transform="translate(22.8,269)" fill="none" stroke="#e4e4e4" stroke-width="1.05" stroke-linecap="round" stroke-linejoin="round"><path d="M-4,-4.4 H-0.6 V4.4 H-4 Z" stroke-width="0.9"/><path d="M0.6,-4.4 L4.4,4.4 H0.6 Z" stroke="#52a7e6" stroke-width="0.9"/><path d="M-0.2,2 L2.2,3.8" stroke="#e4e4e4"/></g><g transform="translate(37.8,269)" fill="none" stroke="#e4e4e4" stroke-width="1.05" stroke-linecap="round" stroke-linejoin="round"><rect x="-4.4" y="-4.4" width="5" height="3" fill="#e4e4e4" stroke="none"/><rect x="-4.4" y="-0.8" width="5" height="3" fill="#e4e4e4" stroke="none"/><rect x="0.2" y="0.4" width="4.2" height="4" fill="#7cc4f4" stroke="#4a4a4a" stroke-width="0.4"/></g><g transform="translate(7.5,283.2)" fill="none" stroke="#e4e4e4" stroke-width="1.05" stroke-linecap="round" stroke-linejoin="round"><rect x="-4.4" y="-4" width="8.6" height="8" rx="0.8" stroke="#52a7e6" stroke-width="1"/><rect x="-3" y="-0.4" width="3.8" height="3.2" rx="0.5" stroke-width="0.9"/></g><g transform="translate(22.8,283.2)" fill="none" stroke="#e4e4e4" stroke-width="1.05" stroke-linecap="round" stroke-linejoin="round"><path d="M-4.2,4.2 L4.2,-4.2" stroke="#52a7e6" stroke-width="1"/><path d="M-2.4,-0.6 L0.6,2.4 M-0.6,-2.4 L2.4,0.6" stroke-width="0.9"/></g><path d="M28.4,287.4 v1.6 h-1.6 z" fill="#a8a8a8"/><g transform="translate(37.8,283.2)" fill="none" stroke="#e4e4e4" stroke-width="1.05" stroke-linecap="round" stroke-linejoin="round"><path d="M-4.4,0 H-1.6 M1.6,0 H4.4" stroke="#52a7e6" stroke-width="1.2"/><path d="M-1,0 L-2.8,-1.5 V1.5 Z M1,0 L2.8,-1.5 V1.5 Z" fill="#52a7e6" stroke="none"/></g><g transform="translate(7.5,297.3)" fill="none" stroke="#e4e4e4" stroke-width="1.05" stroke-linecap="round" stroke-linejoin="round"><rect x="-4.6" y="-4" width="9.2" height="8" rx="0.6" fill="#e4e4e4" stroke="none"/><rect x="-3.4" y="-2.6" width="3" height="2" fill="#4a4a4a" stroke="none"/><rect x="0.6" y="-2.8" width="3" height="5.6" fill="#4a4a4a" stroke="none"/><rect x="-3.4" y="0.6" width="3" height="2" fill="#4a4a4a" stroke="none"/></g><g transform="translate(22.8,297.3)" fill="none" stroke="#e4e4e4" stroke-width="1.05" stroke-linecap="round" stroke-linejoin="round"><rect x="-4" y="-4.4" width="4.6" height="3.6" fill="#e4e4e4" stroke="none"/><rect x="-2.4" y="-1.8" width="4.6" height="3.6" fill="#e4e4e4" stroke="#4a4a4a" stroke-width="0.5"/><circle cx="2.6" cy="2.6" r="1.9" stroke="#52a7e6" stroke-width="1"/></g><g transform="translate(37.8,297.3)" fill="none" stroke="#e4e4e4" stroke-width="1.05" stroke-linecap="round" stroke-linejoin="round"><path d="M0,-4.6 V-0.6" stroke="#f2c230" stroke-width="1.4"/><path d="M-1.2,-0.6 H1.2 L3.2,4.2 H-3.2 Z" fill="#f2c230" stroke="none"/></g><text x="7.5" y="328.20000000000005" text-anchor="middle" font-family="Liberation Sans,sans-serif" font-size="10.4" font-weight="bold" fill="#f0f0f0">A</text><text x="21.8" y="328.20000000000005" text-anchor="middle" font-family="Liberation Sans,sans-serif" font-size="10.4" font-weight="bold" fill="#f0f0f0">A</text><g transform="translate(21.8,324.6)" fill="none" stroke="#e4e4e4" stroke-width="1.05" stroke-linecap="round" stroke-linejoin="round"><path d="M1.4,3.4 L2.6,4.4 L5.2,1.4" stroke="#f2c230" stroke-width="1.1"/></g><text x="37.8" y="328.20000000000005" text-anchor="middle" font-family="Liberation Sans,sans-serif" font-size="10.4" font-weight="bold" fill="#f0f0f0">A</text><g transform="translate(37.8,324.6)" fill="none" stroke="#e4e4e4" stroke-width="1.05" stroke-linecap="round" stroke-linejoin="round"><path d="M-4.4,4.2 H4.4" stroke="#52a7e6" stroke-width="1.3"/></g><g transform="translate(7.5,338.6)" fill="none" stroke="#e4e4e4" stroke-width="1.05" stroke-linecap="round" stroke-linejoin="round"><rect x="-4.6" y="-4" width="6.4" height="5.2" fill="#e4e4e4" stroke="none"/><path d="M-3.4,-2.4 H0.4 M-3.4,-0.6 H-0.6" stroke="#4a4a4a" stroke-width="0.7"/><path d="M0,0.4 L4.2,4.4 M4.2,0.4 L0,4.4 M-3.6,2.2 V4.4" stroke-width="1"/></g><text x="22.8" y="337.6" text-anchor="middle" font-family="Liberation Sans,sans-serif" font-size="3.6" font-weight="bold" fill="#e8e8e8">ABC</text><g transform="translate(22.8,338.6)" fill="none" stroke="#e4e4e4" stroke-width="1.05" stroke-linecap="round" stroke-linejoin="round"><path d="M-2.6,1.8 L-0.6,3.8 L3.2,0" stroke="#3fc25a" stroke-width="1.4"/></g><g transform="translate(37.8,338.6)" fill="none" stroke="#e4e4e4" stroke-width="1.05" stroke-linecap="round" stroke-linejoin="round"><circle cx="-0.6" cy="-0.8" r="3.5" stroke-width="0.9"/><path d="M2,1.8 L4.6,4.4" stroke="#f2c230" stroke-width="1.3"/><path d="M-2.2,0.8 L-0.6,-2.8 L1,0.8 M-1.6,-0.4 H0.4" stroke-width="0.7"/></g><g transform="translate(7.5,352.6)" fill="none" stroke="#e4e4e4" stroke-width="1.05" stroke-linecap="round" stroke-linejoin="round"><rect x="-4.6" y="-4.2" width="5.6" height="5" fill="#52a7e6" stroke="#e4e4e4" stroke-width="0.6"/><rect x="-1.6" y="-1.2" width="6" height="3.2" fill="#e4e4e4" stroke="#4a4a4a" stroke-width="0.4"/><rect x="-3" y="2.6" width="7.4" height="1.8" fill="#e4e4e4" stroke="none"/></g><g transform="translate(22.8,352.6)" fill="none" stroke="#e4e4e4" stroke-width="1.05" stroke-linecap="round" stroke-linejoin="round"><path d="M-4,1 V-2.4 H-1 V1" fill="#52a7e6" stroke="#52a7e6" stroke-width="0.6"/><rect x="-4.4" y="1" width="7.6" height="1.8" fill="#52a7e6" stroke="none"/><rect x="-4.4" y="3.2" width="7.6" height="1.4" fill="#e4e4e4" stroke="none"/><rect x="1.4" y="-4.2" width="3" height="3.2" rx="0.6" stroke="#3fc25a" stroke-width="0.9"/></g><text x="33.199999999999996" y="351.0" font-family="Liberation Sans,sans-serif" font-size="3.2" font-weight="bold" fill="#e0e0e0">ABC</text><text x="38.0" y="357.20000000000005" font-family="Liberation Sans,sans-serif" font-size="6.4" font-weight="bold" fill="#52a7e6">A</text><g transform="translate(37.8,352.6)" fill="none" stroke="#e4e4e4" stroke-width="1.05" stroke-linecap="round" stroke-linejoin="round"><path d="M-3.6,0 C-3.6,2.6 -2,3.4 -0.4,3.4" stroke-width="0.7"/></g><text x="2.9000000000000004" y="365.0" font-family="Liberation Sans,sans-serif" font-size="3.2" font-weight="bold" fill="#e0e0e0">ABC</text><g transform="translate(7.5,366.6)" fill="none" stroke="#e4e4e4" stroke-width="1.05" stroke-linecap="round" stroke-linejoin="round"><path d="M-3.6,0 C-3.6,2.6 -2,3.4 -0.4,3.4" stroke-width="0.7"/><path d="M1,0.4 L4.6,2.6 L1,4.8 Z" fill="#52a7e6" stroke="none"/></g><g transform="translate(7.5,392)" fill="none" stroke="#e4e4e4" stroke-width="1.05" stroke-linecap="round" stroke-linejoin="round"><path d="M-4.4,-3.6 V4 M4.4,-3.6 V4 M-4.4,-2.4 H4.4" stroke-width="1"/><path d="M-3.6,3.6 C-2,-0.4 2,-0.4 3.6,3.6 Z" stroke="#f2c230" stroke-width="0.9"/></g><g transform="translate(22.8,392)" fill="none" stroke="#e4e4e4" stroke-width="1.05" stroke-linecap="round" stroke-linejoin="round"><path d="M-4.4,0.6 V3.6 M4.2,-1 V2.2 M-4.4,2.2 H4.2" stroke-width="1"/><path d="M-3,1 L4,-3.6" stroke="#f2c230" stroke-width="1.2"/></g><g transform="translate(37.8,392)" fill="none" stroke="#e4e4e4" stroke-width="1.05" stroke-linecap="round" stroke-linejoin="round"><path d="M-4.2,-3.6 V4 M4.2,-3.6 V4" stroke-width="1"/><path d="M-4.2,-0.8 H4.2" stroke="#52a7e6" stroke-width="1.5"/></g><path d="M43.4,396.2 v1.6 h-1.6 z" fill="#a8a8a8"/><g transform="translate(7.5,406.3)" fill="none" stroke="#e4e4e4" stroke-width="1.05" stroke-linecap="round" stroke-linejoin="round"><path d="M-4.2,-3.6 V4 M-1.4,-1.6 V4 M1.4,-1.6 V4 M4.2,-1.6 V4" stroke-width="1"/><path d="M-4.2,-2.2 H4.2" stroke="#52a7e6" stroke-width="1.1"/></g><path d="M13.1,410.5 v1.6 h-1.6 z" fill="#a8a8a8"/><g transform="translate(22.8,406.3)" fill="none" stroke="#e4e4e4" stroke-width="1.05" stroke-linecap="round" stroke-linejoin="round"><circle cx="0" cy="0" r="4.2" stroke-width="0.9"/><circle cx="0" cy="0" r="1.2" fill="#52a7e6" stroke="none"/></g><path d="M28.4,410.5 v1.6 h-1.6 z" fill="#a8a8a8"/><g transform="translate(37.8,406.3)" fill="none" stroke="#e4e4e4" stroke-width="1.05" stroke-linecap="round" stroke-linejoin="round"><rect x="-4.8" y="-3" width="9.6" height="6" rx="1" fill="#e4e4e4" stroke="none"/><circle cx="-2.2" cy="0" r="1.4" fill="none" stroke="#4a4a4a" stroke-width="0.6"/><path d="M0.4,-1.6 H3.6 M0.4,0 H3.6 M0.4,1.6 H3.6" stroke="#4a4a4a" stroke-width="0.6"/></g><g transform="translate(10.5,419.2)" fill="none" stroke="#e4e4e4" stroke-width="1.05" stroke-linecap="round" stroke-linejoin="round"><path d="M-2.6,0 H2.6 M0,-2.6 V2.6" stroke="#d6d6d6" stroke-width="0.9"/></g><g transform="translate(25.6,419.2)" fill="none" stroke="#e4e4e4" stroke-width="1.05" stroke-linecap="round" stroke-linejoin="round"><path d="M-2.8,-1.6 H2.8 M-2.8,0.2 H2.8 M-2.8,2 H2.8" stroke="#d0d0d0" stroke-width="0.9"/><path d="M-3.6,1.2 h1.6 v1.6 h-1.6 z" fill="#e8e8e8" stroke="none"/></g><g transform="translate(7.6,29)" fill="none" stroke="#e4e4e4" stroke-width="1.05" stroke-linecap="round" stroke-linejoin="round"><path d="M-3,-1.8 H3.2 V2.4 H-3 Z M3.2,-1.8 L4,-2.8 M-3,-1.8 L-3.6,-2.6" stroke="#cfcfcf" stroke-width="0.8"/></g><g transform="translate(26,28.8)" fill="none" stroke="#e4e4e4" stroke-width="1.05" stroke-linecap="round" stroke-linejoin="round"><path d="M-2.8,-1.6 H1.6 V3 H-2.8 Z M-2.8,-1.6 L-1.2,-3.2 H3.2 V1.4 L1.6,3 M1.6,-1.6 L3.2,-3.2" stroke="#cfcfcf" stroke-width="0.8"/></g><g transform="translate(40.4,28.8)" fill="none" stroke="#e4e4e4" stroke-width="1.05" stroke-linecap="round" stroke-linejoin="round"><path d="M-1.6,-0.8 H1.6 M-1.6,0.8 H1.6" stroke="#7c7c7c" stroke-width="0.6"/></g><rect x="47.8" y="25.4" width="3.6" height="3.2" fill="#7cc8f4"/><rect x="51.9" y="25.4" width="3.4" height="3.2" fill="#d4d4d4"/><rect x="47.8" y="29.1" width="3.6" height="3.2" fill="#f6f6f6"/><rect x="51.9" y="29.1" width="3.4" height="3.2" fill="#e4e4e4"/><g transform="translate(63.4,29)" fill="none" stroke="#e4e4e4" stroke-width="1.05" stroke-linecap="round" stroke-linejoin="round"><path d="M-2.8,0 H2.8 M0,-2.8 V2.8" stroke="#a8a8a8" stroke-width="0.9"/></g><g transform="translate(150.4,16)" fill="none" stroke="#e4e4e4" stroke-width="1.05" stroke-linecap="round" stroke-linejoin="round"><path d="M-4.4,-3.2 H1.8 L4.4,-0.8 V3 H-4.4 Z" fill="#f0f0f0" stroke="none"/><path d="M-3,-1.4 H0.6 M-3,0.4 H2.8" stroke="#9a9a9a" stroke-width="0.7"/></g><g transform="translate(167.8,16)" fill="none" stroke="#e4e4e4" stroke-width="1.05" stroke-linecap="round" stroke-linejoin="round"><path d="M-4.6,-3 H-1.4 L-0.4,-1.8 H3 V-0.4 H4.8 L3,3.2 H-4.6 Z" fill="#f0f0f0" stroke="none"/><path d="M-3.2,2.4 L-1.8,-0.2 H3.4" stroke="#6a6a6a" stroke-width="0.7"/></g><g transform="translate(184,16)" fill="none" stroke="#e4e4e4" stroke-width="1.05" stroke-linecap="round" stroke-linejoin="round"><rect x="-3.8" y="-3.4" width="7.6" height="6.8" fill="#9c9c9c" stroke="#e2e2e2" stroke-width="0.9"/><path d="M-3,-2.6 L3,2.6 M3,-2.6 L-3,2.6" stroke="#d8d8d8" stroke-width="0.6"/></g><g transform="translate(200,16)" fill="none" stroke="#e4e4e4" stroke-width="1.05" stroke-linecap="round" stroke-linejoin="round"><rect x="-3.8" y="-3.4" width="7.6" height="6.6" fill="#9c9c9c" stroke="#e2e2e2" stroke-width="0.9"/><path d="M-3.8,-1.6 H3.8" stroke="#e2e2e2" stroke-width="0.8"/><path d="M1,2.8 L4.2,-0.2" stroke="#f2c230" stroke-width="1.3"/><path d="M3.8,0.2 L4.8,-0.8" stroke="#e04040" stroke-width="1.2"/></g><g transform="translate(241.8,16.2)" fill="none" stroke="#e4e4e4" stroke-width="1.05" stroke-linecap="round" stroke-linejoin="round"><path transform="scale(0.86)" d="M-4.4,-0.6 L-0.6,-3.4 V-1.6 C2.6,-1.6 4.2,0 4.4,2.8 C3,1 1.6,0.6 -0.6,0.6 V2.4 Z" fill="#f0f0f0" stroke="none"/></g><g transform="translate(258.2,16.2)" fill="none" stroke="#e4e4e4" stroke-width="1.05" stroke-linecap="round" stroke-linejoin="round"><path transform="scale(0.86)" d="M4.4,-0.6 L0.6,-3.4 V-1.6 C-2.6,-1.6 -4.2,0 -4.4,2.8 C-3,1 -1.6,0.6 0.6,0.6 V2.4 Z" fill="#f0f0f0" stroke="none"/></g><g transform="translate(299.4,16)" fill="none" stroke="#e4e4e4" stroke-width="1.05" stroke-linecap="round" stroke-linejoin="round"><rect x="-2.8" y="-3.8" width="5.6" height="2.4" fill="#f0f0f0" stroke="none"/><rect x="-4.6" y="-1.6" width="9.2" height="4" rx="0.8" fill="#f0f0f0" stroke="none"/><rect x="-2.8" y="1" width="5.6" height="3" fill="#f0f0f0" stroke="#6a6a6a" stroke-width="0.5"/></g><g transform="translate(299.4,16)" fill="none" stroke="#e4e4e4" stroke-width="1.05" stroke-linecap="round" stroke-linejoin="round"><path d="M-2,2.4 H2" stroke="#52a7e6" stroke-width="0.9"/></g><circle cx="304.6" cy="13.3" r="1.7" fill="#f4581c"/><g transform="translate(315.6,16)" fill="none" stroke="#e4e4e4" stroke-width="1.05" stroke-linecap="round" stroke-linejoin="round"><rect x="-2.8" y="-3.8" width="5.6" height="2.4" fill="#f0f0f0" stroke="none"/><rect x="-4.6" y="-1.6" width="9.2" height="4" rx="0.8" fill="#f0f0f0" stroke="none"/><rect x="-2.8" y="1" width="5.6" height="3" fill="#f0f0f0" stroke="#6a6a6a" stroke-width="0.5"/></g><g transform="translate(315.6,16)" fill="none" stroke="#e4e4e4" stroke-width="1.05" stroke-linecap="round" stroke-linejoin="round"><rect x="1" y="2" width="3" height="1.8" fill="#52a7e6" stroke="none"/></g><g transform="translate(332.6,16)" fill="none" stroke="#e4e4e4" stroke-width="1.05" stroke-linecap="round" stroke-linejoin="round"><rect x="-4" y="-3.8" width="4.6" height="5.6" fill="#f0f0f0" stroke="none"/><rect x="-1.4" y="-1.8" width="5.2" height="5.6" fill="#f0f0f0" stroke="#5a5a5a" stroke-width="0.5"/><path d="M0,0 H2.6 M0,1.6 H2.6" stroke="#8a8a8a" stroke-width="0.5"/></g><g transform="translate(348.4,16)" fill="none" stroke="#e4e4e4" stroke-width="1.05" stroke-linecap="round" stroke-linejoin="round"><rect x="-3.6" y="-3.8" width="5.6" height="7.6" fill="#f0f0f0" stroke="none"/><path d="M-2.4,-2 H0.8 M-2.4,-0.4 H0.8 M-2.4,1.2 H0" stroke="#8a8a8a" stroke-width="0.5"/><path d="M1.2,3 L4.2,-0.4" stroke="#f2c230" stroke-width="1.3"/><path d="M3.8,0 L4.6,-1" stroke="#e04040" stroke-width="1.1"/></g><g transform="translate(390.6,16)" fill="none" stroke="#e4e4e4" stroke-width="1.05" stroke-linecap="round" stroke-linejoin="round"><rect x="-3.6" y="-3.2" width="7.6" height="7" fill="#f0f0f0" stroke="none"/><path d="M-2.2,1 H2.6 M-2.2,2.4 H2.6" stroke="#9a9a9a" stroke-width="0.5"/><path d="M-4.6,-2.6 L-1,-3.8 V-0.6 Z" fill="#52a7e6" stroke="none"/><path d="M-2,-2.2 H1.4" stroke="#52a7e6" stroke-width="1"/></g><g transform="translate(406.8,16)" fill="none" stroke="#e4e4e4" stroke-width="1.05" stroke-linecap="round" stroke-linejoin="round"><path d="M-3.6,-3.8 H1 L3,-1.8 V3.8 H-3.6 Z" fill="#f0f0f0" stroke="none"/><path d="M-2.4,-1.4 H1 M-2.4,0.2 H1.4" stroke="#9a9a9a" stroke-width="0.5"/><path d="M0.6,1 L4.6,2.6 L1.6,3.8 Z" fill="#52a7e6" stroke="none"/></g><g transform="translate(423.6,16)" fill="none" stroke="#e4e4e4" stroke-width="1.05" stroke-linecap="round" stroke-linejoin="round"><path d="M-4.2,-1.6 H-0.8 L0.2,-0.4 H4.2 V3.8 H-4.2 Z" fill="#f0f0f0" stroke="none"/><rect x="-3.6" y="-4" width="3" height="3" fill="#52a7e6" stroke="none"/></g><g transform="translate(440.4,16)" fill="none" stroke="#e4e4e4" stroke-width="1.05" stroke-linecap="round" stroke-linejoin="round"><rect x="-4" y="-3.4" width="7.4" height="5.4" fill="#f0f0f0" stroke="none"/><rect x="-2.8" y="-2.4" width="5" height="3" fill="#8a8a8a" stroke="none"/><rect x="-2.6" y="2.4" width="4.6" height="1.4" fill="#f0f0f0" stroke="none"/><rect x="0.8" y="-4.2" width="3.8" height="3.6" rx="0.6" fill="#52a7e6" stroke="none"/></g><g transform="translate(457.2,16)" fill="none" stroke="#e4e4e4" stroke-width="1.05" stroke-linecap="round" stroke-linejoin="round"><rect x="-3.8" y="-3.6" width="7.6" height="7.4" fill="#f0f0f0" stroke="none"/><rect x="-2.8" y="-2.4" width="1.8" height="2" fill="#e04040" stroke="none"/><rect x="-2.8" y="0.4" width="1.8" height="2" fill="#3fc25a" stroke="none"/><rect x="0" y="-2.6" width="1.4" height="5.4" fill="#52a7e6" stroke="none"/><rect x="2" y="-2.6" width="1" height="5.4" fill="#9a9a9a" stroke="none"/></g><circle cx="462.9" cy="13.3" r="1.7" fill="#f4581c"/><g transform="translate(498.2,16)" fill="none" stroke="#e4e4e4" stroke-width="1.05" stroke-linecap="round" stroke-linejoin="round"><rect x="-3.6" y="-3.4" width="7" height="6.6" stroke="#8c8c8c" stroke-width="0.8"/><circle cx="2.2" cy="1.8" r="1.1" stroke="#8c8c8c" stroke-width="0.6"/></g><g transform="translate(514.3,16)" fill="none" stroke="#e4e4e4" stroke-width="1.05" stroke-linecap="round" stroke-linejoin="round"><path d="M-2.6,4 C-4.6,1.4 -4.8,-0.4 -3.8,-0.8 L-2.4,0.6 V-2.8 C-2.4,-3.8 -1.2,-3.8 -1.2,-2.8 V-3.6 C-1.2,-4.6 0,-4.6 0,-3.6 V-3.2 C0,-4.2 1.2,-4.2 1.2,-3.2 V-2.4 C1.2,-3.2 2.4,-3.2 2.4,-2.4 V1.4 C2.4,2.6 2,3.4 1.6,4 Z" fill="#f0f0f0" stroke="none"/></g><g transform="translate(531.4,16)" fill="none" stroke="#e4e4e4" stroke-width="1.05" stroke-linecap="round" stroke-linejoin="round"><ellipse cx="0" cy="0" rx="4.4" ry="1.8" stroke="#f0f0f0" stroke-width="0.9"/><ellipse cx="0" cy="0" rx="1.5" ry="3.8" stroke="#52a7e6" stroke-width="0.9"/><circle cx="0" cy="0" r="0.9" fill="#f0f0f0" stroke="none"/></g><g transform="translate(572.4,16)" fill="none" stroke="#e4e4e4" stroke-width="1.05" stroke-linecap="round" stroke-linejoin="round"><rect x="-3.8" y="-3.8" width="6" height="6.6" fill="#f0f0f0" stroke="none"/><rect x="-2.8" y="-2.8" width="1.8" height="1.6" fill="#52a7e6" stroke="none"/><rect x="-0.4" y="-2.8" width="1.8" height="1.6" fill="#52a7e6" stroke="none"/><path d="M-2.8,0.4 H1.4 M-2.8,1.6 H1.4" stroke="#8a8a8a" stroke-width="0.5"/><path d="M1.6,1 L4.4,2.4 L2.6,4 Z" fill="#f2c230" stroke="none"/></g><g transform="translate(589,16)" fill="none" stroke="#e4e4e4" stroke-width="1.05" stroke-linecap="round" stroke-linejoin="round"><rect x="-4.2" y="-2" width="3.6" height="3.4" fill="#f0f0f0" stroke="none"/><rect x="-1.2" y="-0.4" width="5.4" height="4.2" fill="#f0f0f0" stroke="#5a5a5a" stroke-width="0.4"/><rect x="0.2" y="-3.8" width="3" height="2.8" fill="#52a7e6" stroke="none"/><path d="M0,1.4 H3" stroke="#52a7e6" stroke-width="0.8"/></g><g transform="translate(605.6,16)" fill="none" stroke="#e4e4e4" stroke-width="1.05" stroke-linecap="round" stroke-linejoin="round"><path d="M-4,-3.4 H3.4 V3.4 H-4 Z" fill="#f0f0f0" stroke="none"/><circle cx="0.4" cy="0.2" r="2.5" fill="#3fc25a" stroke="#3a3a3a" stroke-width="0.4"/><path d="M-0.8,0.2 H1.6 M0.4,-1 V1.4" stroke="#fff" stroke-width="0.7"/><rect x="2" y="1.6" width="2.6" height="2.2" fill="#52a7e6" stroke="none"/></g><g transform="translate(622.4,16)" fill="none" stroke="#e4e4e4" stroke-width="1.05" stroke-linecap="round" stroke-linejoin="round"><circle cx="-2.2" cy="-1.8" r="1.9" fill="#3fc25a" stroke="none"/><circle cx="2.4" cy="2" r="2.1" fill="#7cc4f4" stroke="none"/><path d="M0,-2.4 C2,-2.4 2.6,-1.4 2.6,-0.4" stroke="#f0f0f0" stroke-width="0.7"/><path d="M-2,0.4 C-2,2 -1.2,2.6 0,2.6" stroke="#f0f0f0" stroke-width="0.7"/></g><g transform="translate(639.4,16)" fill="none" stroke="#e4e4e4" stroke-width="1.05" stroke-linecap="round" stroke-linejoin="round"><rect x="-4" y="-3.4" width="5" height="7" fill="#f0f0f0" stroke="none"/><rect x="-1" y="-2" width="4.6" height="5.8" fill="#f0f0f0" stroke="#5a5a5a" stroke-width="0.5"/><rect x="-2.8" y="-1.8" width="1.4" height="3.6" fill="#8a8a8a" stroke="none"/><path d="M0.2,-0.2 H2.4 M0.2,1.4 H2.4" stroke="#9a9a9a" stroke-width="0.5"/></g><circle cx="644.4" cy="13.2" r="1.7" fill="#f4581c"/><g transform="translate(680,16)" fill="none" stroke="#e4e4e4" stroke-width="1.05" stroke-linecap="round" stroke-linejoin="round"><rect x="-4.2" y="-1.4" width="7" height="5" fill="#f0f0f0" stroke="none"/><rect x="-3.2" y="-3.4" width="2.2" height="1.8" fill="#f0f0f0" stroke="none"/><rect x="-0.4" y="-3.4" width="2.2" height="1.8" fill="#f0f0f0" stroke="none"/><path d="M-3,0.6 H1.6 M-3,2 H1.6" stroke="#8a8a8a" stroke-width="0.5"/><rect x="1" y="0.6" width="2.2" height="2" fill="#f2c230" stroke="none"/></g><circle cx="685.6" cy="13.4" r="1.7" fill="#f4581c"/><g transform="translate(696.2,16)" fill="none" stroke="#e4e4e4" stroke-width="1.05" stroke-linecap="round" stroke-linejoin="round"><rect x="-4.2" y="-3.4" width="5.4" height="4.4" fill="none" stroke="#f0f0f0" stroke-width="0.9"/><path d="M-2.8,-1.6 H-0.4" stroke="#f0f0f0" stroke-width="0.7"/><path d="M0,1 L4,4.2 M4,1 L0,4.2" stroke="#f0f0f0" stroke-width="1"/><path d="M-3.4,2.6 H-1" stroke="#f0f0f0" stroke-width="0.8"/></g><circle cx="701.8" cy="13.4" r="1.7" fill="#f4581c"/><rect x="375" y="2" width="7.2" height="4.4" fill="#3f7fd0"/><path d="M375,6 L382.2,4.6 V8.8 H375 Z" fill="#e8b030"/><rect x="376.2" y="2.8" width="1.6" height="2.2" fill="#e8e8e8"/><rect x="378.8" y="2.4" width="1.4" height="2.6" fill="#cfe0f4"/><rect x="794" y="1.2" width="3.6" height="4.4" rx="1.6" fill="#f2f2f2"/><path d="M792.3,8.6 C792.3,5.4 799.3,5.4 799.3,8.6 Z" fill="#f2f2f2"/><path d="M843.2,4.4 h4.6 l-2.3,2.6 z" fill="#e4e4e4"/><g transform="translate(670,418.3)" fill="none" stroke="#e4e4e4" stroke-width="1.05" stroke-linecap="round" stroke-linejoin="round"><path d="M-2.4,-3 V3 M0,-3 V3 M2.4,-3 V3 M-3.4,-1 H3.4 M-3.4,1 H3.4" stroke="#e0e0e0" stroke-width="0.8"/></g><g transform="translate(681,418.3)" fill="none" stroke="#e4e4e4" stroke-width="1.05" stroke-linecap="round" stroke-linejoin="round"><circle cx="-2.4" cy="-2.6" r="0.5" fill="#b0b0b0" stroke="none"/><circle cx="-2.4" cy="0" r="0.5" fill="#b0b0b0" stroke="none"/><circle cx="-2.4" cy="2.6" r="0.5" fill="#b0b0b0" stroke="none"/><circle cx="0" cy="-2.6" r="0.5" fill="#b0b0b0" stroke="none"/><circle cx="0" cy="0" r="0.5" fill="#b0b0b0" stroke="none"/><circle cx="0" cy="2.6" r="0.5" fill="#b0b0b0" stroke="none"/><circle cx="2.4" cy="-2.6" r="0.5" fill="#b0b0b0" stroke="none"/><circle cx="2.4" cy="0" r="0.5" fill="#b0b0b0" stroke="none"/><circle cx="2.4" cy="2.6" r="0.5" fill="#b0b0b0" stroke="none"/></g><g transform="translate(691.4,418.3)" fill="none" stroke="#e4e4e4" stroke-width="1.05" stroke-linecap="round" stroke-linejoin="round"><path d="M-3,-3.6 V3.2 H3.4" stroke="#d0d0d0" stroke-width="0.9"/><path d="M-1.2,3.2 V1.4 H-3" stroke="#d0d0d0" stroke-width="0.5"/></g><rect x="698.7" y="414" width="10" height="8.8" fill="#4c86c6"/><g transform="translate(703.7,418.3)" fill="none" stroke="#e4e4e4" stroke-width="1.05" stroke-linecap="round" stroke-linejoin="round"><circle cx="-0.4" cy="0.4" r="2.9" stroke="#f4f4f4" stroke-width="1"/><path d="M-0.4,0.4 L3.6,-3.4" stroke="#f4f4f4" stroke-width="0.9"/></g><rect x="710" y="414" width="10" height="8.8" fill="#4c86c6"/><g transform="translate(715,418.3)" fill="none" stroke="#e4e4e4" stroke-width="1.05" stroke-linecap="round" stroke-linejoin="round"><path d="M-3.6,-2.6 H-0.6 M-2.1,-4 V-1.2" stroke="#fff" stroke-width="0.8"/><rect x="-3.4" y="0.2" width="7" height="2.8" fill="#f4f4f4" stroke="none"/></g><g transform="translate(725.6,418.3)" fill="none" stroke="#e4e4e4" stroke-width="1.05" stroke-linecap="round" stroke-linejoin="round"><path d="M-3.8,-2.8 H3.8" stroke="#f0f0f0" stroke-width="1.4"/><path d="M-3.8,0 H3.8" stroke="#e0e0e0" stroke-width="1"/><path d="M-3.8,2.6 H3.8" stroke="#d0d0d0" stroke-width="0.6"/></g><rect x="732.3" y="414" width="10" height="8.8" fill="#4c86c6"/><g transform="translate(737.3,418.3)" fill="none" stroke="#e4e4e4" stroke-width="1.05" stroke-linecap="round" stroke-linejoin="round"><rect x="-3.4" y="-3" width="6.8" height="6" stroke="#f4f4f4" stroke-width="0.8"/><path d="M-3.4,-1 H3.4 M-3.4,1 H3.4 M-1.2,-3 V3 M1.2,-3 V3" stroke="#e8f0fa" stroke-width="0.5"/></g><rect x="743.2" y="414" width="10" height="8.8" fill="#4c86c6"/><g transform="translate(748.2,418.3)" fill="none" stroke="#e4e4e4" stroke-width="1.05" stroke-linecap="round" stroke-linejoin="round"><rect x="-3.6" y="-3.4" width="4.6" height="5" stroke="#f4f4f4" stroke-width="0.8"/><circle cx="0.8" cy="0.4" r="2" stroke="#f4f4f4" stroke-width="0.8"/><path d="M2.2,1.8 L3.8,3.6" stroke="#f4f4f4" stroke-width="0.9"/></g><rect x="754.2" y="414" width="10" height="8.8" fill="#4c86c6"/><g transform="translate(759.2,418.3)" fill="none" stroke="#e4e4e4" stroke-width="1.05" stroke-linecap="round" stroke-linejoin="round"><path d="M-3.6,3.4 L3.6,-3.4" stroke="#fff" stroke-width="1"/><path d="M-3.6,3.4 H3.4" stroke="#e8f0fa" stroke-width="0.7"/></g><rect x="765.2" y="414" width="10" height="8.8" fill="#4c86c6"/><g transform="translate(770.2,418.3)" fill="none" stroke="#e4e4e4" stroke-width="1.05" stroke-linecap="round" stroke-linejoin="round"><rect x="-2.8" y="-2" width="6" height="5.4" stroke="#f4f4f4" stroke-width="0.9"/><path d="M-4,-3.4 H1.6 M-4,-3.4 V1.8" stroke="#e8f0fa" stroke-width="0.7"/></g><rect x="776.4" y="414" width="10" height="8.8" fill="#4c86c6"/><g transform="translate(781.4,418.3)" fill="none" stroke="#e4e4e4" stroke-width="1.05" stroke-linecap="round" stroke-linejoin="round"><path d="M0,-3.6 L1.1,-0.6 L3.8,3 L2.2,3.2 L0,0.8 L-2.2,3.2 L-3.8,3 L-1.1,-0.6 Z" fill="#fff" stroke="none" transform="scale(1.0)"/></g><g transform="translate(792.6,418.3)" fill="none" stroke="#e4e4e4" stroke-width="1.05" stroke-linecap="round" stroke-linejoin="round"><path d="M0,-3.6 L1.1,-0.6 L3.8,3 L2.2,3.2 L0,0.8 L-2.2,3.2 L-3.8,3 L-1.1,-0.6 Z" fill="#f0f0f0" stroke="none" transform="scale(1.0)"/></g><path d="M794.4,414.8 l0.6,1.2 l1.2,0.2 l-0.9,0.8 l0.3,1.2 l-1.2,-0.7 z" fill="#f2c230"/><g transform="translate(803.8,418.3)" fill="none" stroke="#e4e4e4" stroke-width="1.05" stroke-linecap="round" stroke-linejoin="round"><path d="M0,-3.6 L1.1,-0.6 L3.8,3 L2.2,3.2 L0,0.8 L-2.2,3.2 L-3.8,3 L-1.1,-0.6 Z" fill="#f0f0f0" stroke="none" transform="scale(1.0)"/></g><path d="M820,417.4 h3.2 l-1.6,2 z" fill="#d8d8d8"/><g transform="translate(830,418.3)" fill="none" stroke="#e4e4e4" stroke-width="1.05" stroke-linecap="round" stroke-linejoin="round"><rect x="-3.6" y="-3.6" width="3" height="3" stroke="#e0e0e0" stroke-width="0.8"/><circle cx="2.6" cy="-1.4" r="1.4" stroke="#e0e0e0" stroke-width="0.8"/><path d="M-1,0.4 V3.4 M-2.6,3.4 H0.6 M1.4,2.2 L3.4,3.6" stroke="#e0e0e0" stroke-width="0.8"/></g><g transform="translate(842.6,418.3)" fill="none" stroke="#e4e4e4" stroke-width="1.05" stroke-linecap="round" stroke-linejoin="round"><circle cx="0" cy="0" r="2.2" stroke="#f4f4f4" stroke-width="1.5"/><circle cx="0" cy="0" r="3.3" stroke="#f4f4f4" stroke-width="1.2" stroke-dasharray="1.3 1.29"/></g><g transform="translate(344,136.6)" fill="none" stroke="#e4e4e4" stroke-width="1.05" stroke-linecap="round" stroke-linejoin="round"><path d="M0,-3.2 L1,-0.6 L3.2,2.4 L1.8,2.6 L0,0.6 L-1.8,2.6 L-3.2,2.4 L-1,-0.6 Z" fill="#1c7be8" stroke="none"/></g><g transform="translate(362.3,136.6)" fill="none" stroke="#e4e4e4" stroke-width="1.05" stroke-linecap="round" stroke-linejoin="round"><path d="M-2.8,-3 H0.4 L1.6,-1.8 V3 H-2.8 Z" fill="#c2c2c2" stroke="none"/><path d="M-1.6,2 L-0.6,-0.8 L0.4,2" stroke="#8a8a8a" stroke-width="0.6"/><circle cx="2.4" cy="1.8" r="1.2" fill="#f0c050" stroke="none"/></g><g transform="translate(381.3,136.6)" fill="none" stroke="#e4e4e4" stroke-width="1.05" stroke-linecap="round" stroke-linejoin="round"><path d="M-4,-3.3 H4.2" stroke="#3f8fe8" stroke-width="0.8"/><g transform="translate(-0.5,-1.9) scale(-1,1)"><path d="M0,4 V0 H1.5 a1,1 0 0 1 0,2 H0 M1.1,2 L2.3,4" stroke="#6a6a6a" stroke-width="0.75" fill="none"/></g><g transform="translate(0.6,-1.9)"><path d="M0,4 V0 H1.5 a1,1 0 0 1 0,2 H0 M1.1,2 L2.3,4" stroke="#6a6a6a" stroke-width="0.75" fill="none"/></g></g><g transform="translate(401,136.6)" fill="none" stroke="#e4e4e4" stroke-width="1.05" stroke-linecap="round" stroke-linejoin="round"><path d="M-3.8,2.6 H5.4" stroke="#3f8fe8" stroke-width="0.8"/><g transform="translate(-1.4,-2.6) scale(-1,1)"><path d="M0,4 V0 H2 M0,1.9 H1.5" stroke="#6a6a6a" stroke-width="0.75" fill="none"/></g><g transform="translate(-0.4,-2.6)"><path d="M0,4 V0 H2 M0,1.9 H1.5" stroke="#6a6a6a" stroke-width="0.75" fill="none"/></g><circle cx="3.6" cy="0.3" r="1" stroke="#6a6a6a" stroke-width="0.7"/><path d="M4.7,-0.8 V1.4" stroke="#6a6a6a" stroke-width="0.7"/></g><g transform="translate(419.6,136.4)" fill="none" stroke="#e4e4e4" stroke-width="1.05" stroke-linecap="round" stroke-linejoin="round"><path d="M0,-3.8 V3.6" stroke="#3f8fe8" stroke-width="1"/><path d="M1.4,-3.2 v1.6 M1.6,-0.8 v1.6 M1.4,1.6 v1.4" stroke="#c9a27a" stroke-width="1.1"/></g></svg>
</div></body></html>
